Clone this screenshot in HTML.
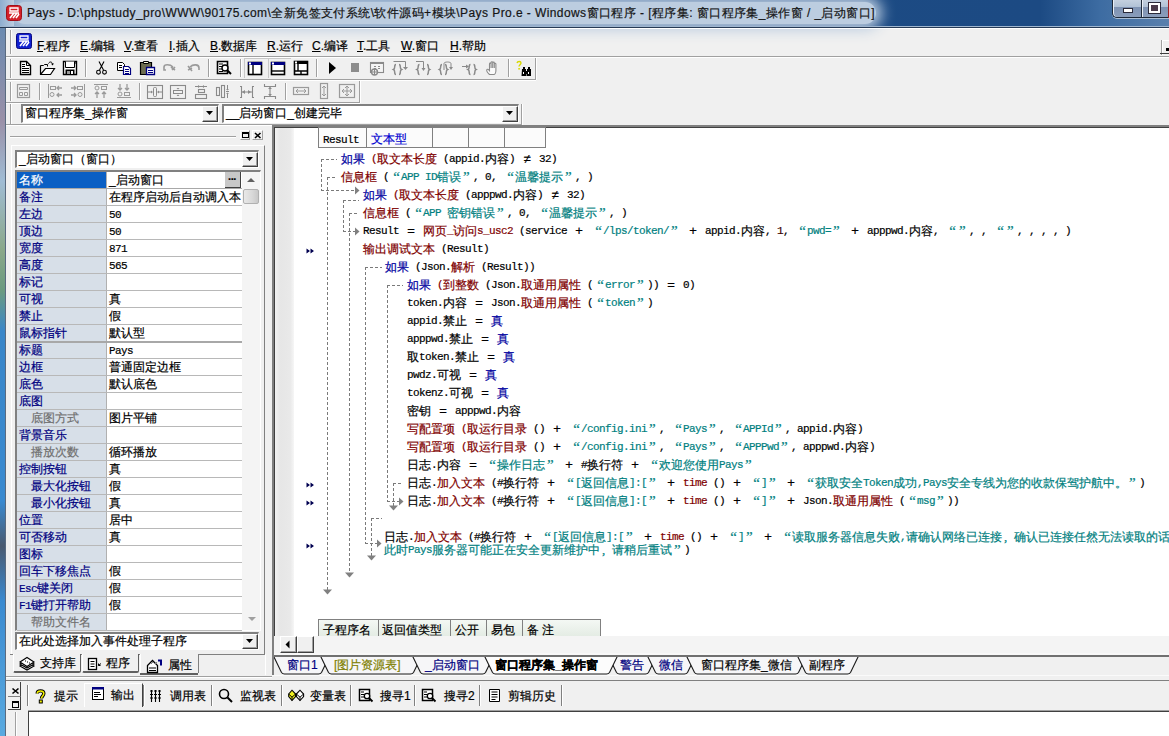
<!DOCTYPE html><html><head><meta charset="utf-8"><style>
*{margin:0;padding:0;box-sizing:border-box}
html,body{width:1169px;height:736px;overflow:hidden;background:#f0f0f0;font-family:"Liberation Sans",sans-serif;font-size:12px;color:#000;position:relative}
.t{position:absolute;white-space:pre;line-height:14px;-webkit-text-stroke:0.2px}
svg{position:absolute;overflow:visible}
.c{position:absolute;white-space:pre;line-height:14px;font-size:12px;-webkit-text-stroke:0.2px}
</style></head><body><div style="position:absolute;left:0;top:0;width:1169px;height:27px;background:linear-gradient(90deg,#7b9dc2 0px,#6a90bb 20px,#2c5b92 420px,#1c4b84 720px,#1c4a83 1040px,#3d6ca2 1100px,#5a80ad 1169px)"></div>
<div style="position:absolute;left:14px;top:2px;width:862px;height:22px;background:#bccde0;border-radius:11px;box-shadow:0 0 14px 6px #bccde0"></div>
<div style="position:absolute;left:0;top:0;width:14px;height:26px;background:linear-gradient(90deg,#8eadcf,#bccde0)"></div>
<div style="position:absolute;left:0px;top:26px;width:1169px;height:1px;background:#9fb6cf"></div>
<div style="position:absolute;left:0px;top:27px;width:1169px;height:1px;background:#263a55"></div>
<div style="position:absolute;left:6px;top:28px;width:1163px;height:1px;background:#ffffff"></div>
<svg style="left:6px;top:5px" width="16" height="16" viewBox="0 0 16 16"><rect x="0.5" y="0.5" width="15" height="15" rx="3" fill="#d4202a" stroke="#a01018"/><path d="M4 3h8v3H4z" fill="none" stroke="#fff" stroke-width="1.3"/><path d="M3 8h10M4 13l4-5M7 13l4-5M10 13l3-4" stroke="#fff" stroke-width="1.6"/></svg>
<div class="t" style="left:27px;top:6px;color:#151515;letter-spacing:0.42px">Pays - D:\phpstudy_pro\WWW\90175.com\全新免签支付系统\软件源码+模块\Pays Pro.e - Windows窗口程序 - [程序集: 窗口程序集_操作窗 / _启动窗口]</div>
<div style="position:absolute;left:1112px;top:-3px;width:31px;height:21px;border:1px solid #1e2a3a;border-right:none;border-radius:0 0 0 5px;background:linear-gradient(#c9d4e2 0,#b2c2d6 45%,#7f93b3 50%,#8a9dbb 100%);box-shadow:inset 1px 0 #e8eef6, 0 1px #a9bdd4"></div>
<div style="position:absolute;left:1141px;top:-3px;width:28px;height:21px;border:1px solid #1e2a3a;border-right:none;background:linear-gradient(#c9d4e2 0,#b2c2d6 45%,#7f93b3 50%,#8a9dbb 100%);box-shadow:inset 1px 0 #e8eef6, 0 1px #a9bdd4"></div>
<div style="position:absolute;left:1123px;top:8px;width:10px;height:5px;background:#fff;border:1px solid #2a2a3a"></div>
<div style="position:absolute;left:1149px;top:3px;width:11px;height:10px;border:2px solid #fff;background:#4a3a4a;outline:1px solid #2a2a3a"></div>
<div style="position:absolute;left:1168px;top:0px;width:1px;height:18px;background:#a02020"></div>
<div style="position:absolute;left:0;top:28px;width:5px;height:708px;background:linear-gradient(#6a8ab0 0px,#9a90a8 93px,#a0bcd4 153px,#8aa888 223px,#6a9a80 263px,#3a86c8 303px,#3a8ad0 473px,#4a5a70 518px,#3a8ad0 573px,#5aaae0 708px)"></div>
<div style="position:absolute;left:5px;top:28px;width:1px;height:708px;background:#5a6b80"></div>
<div style="position:absolute;left:6px;top:56px;width:1163px;height:1px;background:#a0a0a0"></div>
<div style="position:absolute;left:6px;top:57px;width:1163px;height:1px;background:#ffffff"></div>
<div style="position:absolute;left:10px;top:30px;width:1px;height:24px;background:#a0a0a0"></div>
<div style="position:absolute;left:11px;top:30px;width:1px;height:24px;background:#ffffff"></div>
<svg style="left:16px;top:33px" width="16" height="16" viewBox="0 0 16 16"><rect x="0.5" y="0.5" width="15" height="15" rx="2" fill="#1020d0" stroke="#0a0a80"/><path d="M4 3h8v3H4z" fill="none" stroke="#fff" stroke-width="1.3"/><path d="M3 8h10M4 13l4-5M7 13l4-5M10 13l3-4" stroke="#fff" stroke-width="1.6"/></svg>
<div class="t" style="left:37px;top:39px;"><u>F</u>.程序</div>
<div class="t" style="left:80px;top:39px;"><u>E</u>.编辑</div>
<div class="t" style="left:124px;top:39px;"><u>V</u>.查看</div>
<div class="t" style="left:169px;top:39px;"><u>I</u>.插入</div>
<div class="t" style="left:210px;top:39px;"><u>B</u>.数据库</div>
<div class="t" style="left:267px;top:39px;"><u>R</u>.运行</div>
<div class="t" style="left:312px;top:39px;"><u>C</u>.编译</div>
<div class="t" style="left:357px;top:39px;"><u>T</u>.工具</div>
<div class="t" style="left:401px;top:39px;"><u>W</u>.窗口</div>
<div class="t" style="left:450px;top:39px;"><u>H</u>.帮助</div>
<div style="position:absolute;left:1162px;top:40px;width:8px;height:15px;border-left:1px solid #fff;border-top:1px solid #fff;box-shadow:-1px 0 #a0a0a0"></div>
<div style="position:absolute;left:1166px;top:48px;width:3px;height:3px;background:#000"></div>
<div style="position:absolute;left:1160px;top:53px;width:9px;height:1px;background:#404040"></div>
<div style="position:absolute;left:6px;top:79px;width:530px;height:1px;background:#a0a0a0"></div>
<div style="position:absolute;left:6px;top:80px;width:530px;height:1px;background:#ffffff"></div>
<div style="position:absolute;left:535px;top:58px;width:1px;height:22px;background:#a0a0a0"></div>
<div style="position:absolute;left:536px;top:58px;width:1px;height:22px;background:#ffffff"></div>
<div style="position:absolute;left:10px;top:59px;width:1px;height:19px;background:#a0a0a0"></div>
<div style="position:absolute;left:11px;top:59px;width:1px;height:19px;background:#ffffff"></div>
<div style="position:absolute;left:6px;top:102px;width:354px;height:1px;background:#a0a0a0"></div>
<div style="position:absolute;left:6px;top:103px;width:354px;height:1px;background:#ffffff"></div>
<div style="position:absolute;left:359px;top:81px;width:1px;height:22px;background:#a0a0a0"></div>
<div style="position:absolute;left:360px;top:81px;width:1px;height:22px;background:#ffffff"></div>
<div style="position:absolute;left:10px;top:82px;width:1px;height:19px;background:#a0a0a0"></div>
<div style="position:absolute;left:11px;top:82px;width:1px;height:19px;background:#ffffff"></div>
<div style="position:absolute;left:6px;top:124px;width:516px;height:1px;background:#a0a0a0"></div>
<div style="position:absolute;left:6px;top:125px;width:516px;height:1px;background:#ffffff"></div>
<div style="position:absolute;left:521px;top:104px;width:1px;height:21px;background:#a0a0a0"></div>
<div style="position:absolute;left:522px;top:104px;width:1px;height:21px;background:#ffffff"></div>
<div style="position:absolute;left:10px;top:104px;width:1px;height:20px;background:#a0a0a0"></div>
<div style="position:absolute;left:11px;top:104px;width:1px;height:20px;background:#ffffff"></div>
<svg style="left:19px;top:61px" width="14" height="14" viewBox="0 0 14 14"><path d="M1.5 0.5h6l4 4v9h-10z" fill="#fff" stroke="#000" stroke-width="1.4"/><path d="M7.5 0.5v4h4" fill="none" stroke="#000"/><path d="M3 3.5h3M3 5.5h3M3 7.5h7M3 9.5h7M3 11.5h7" stroke="#000" stroke-width="1"/></svg>
<svg style="left:40px;top:61px" width="15" height="14" viewBox="0 0 15 14"><path d="M0.5 4.5h3l1-1h3v2" fill="none" stroke="#000"/><path d="M0.5 4.5v9h10l4-6h-9l-5 6" fill="#fff" stroke="#000" stroke-width="1.2"/><path d="M8.5 2.5c1-2 3-2 4 0" fill="none" stroke="#000"/><path d="M11 2.5h3l-1.5 2z" fill="#000"/></svg>
<svg style="left:63px;top:61px" width="14" height="14" viewBox="0 0 14 14"><path d="M0.5 0.5h13v13h-13z" fill="#fff" stroke="#000" stroke-width="1.4"/><path d="M2.5 0.5v6h9v-6" fill="#fff" stroke="#000"/><path d="M2.5 8.5h9v5h-9z" fill="#000"/><rect x="4" y="10" width="3" height="3" fill="#999"/><rect x="8" y="10" width="2" height="3" fill="#fff"/><rect x="12" y="1.5" width="1" height="1" fill="#000"/></svg>
<div style="position:absolute;left:85px;top:59px;width:1px;height:18px;background:#a0a0a0"></div>
<div style="position:absolute;left:86px;top:59px;width:1px;height:18px;background:#ffffff"></div>
<svg style="left:96px;top:61px" width="11" height="14" viewBox="0 0 11 14"><path d="M3 0.5l4.5 8.5M8 0.5l-4.5 8.5" stroke="#000" stroke-width="1.1" fill="none"/><circle cx="2.5" cy="11.2" r="1.9" fill="none" stroke="#000" stroke-width="1.1"/><circle cx="8.5" cy="11.2" r="1.9" fill="none" stroke="#000" stroke-width="1.1"/></svg>
<svg style="left:117px;top:62px" width="15" height="14" viewBox="0 0 15 14"><path d="M0.5 0.5h5l2 2v6h-7z" fill="#fff" stroke="#000"/><path d="M2 3.5h3M2 5.5h3" stroke="#000"/><path d="M6.5 4.5h5l2 2v6h-7z" fill="#fff" stroke="#000080" stroke-width="1.2"/><path d="M8 7.5h4M8 9.5h4M8 11.5h4" stroke="#000080"/></svg>
<svg style="left:140px;top:61px" width="15" height="14" viewBox="0 0 15 14"><path d="M0.5 1.5h11v12h-11z" fill="#6e6e50" stroke="#000" stroke-width="1.2"/><path d="M3.5 0.5h5v2h-5z" fill="#ffffe0" stroke="#000"/><path d="M6.5 6.5h8v7h-8z" fill="#fff" stroke="#000080" stroke-width="1.3"/><path d="M8 9.5h5M8 11.5h5" stroke="#000080"/></svg>
<svg style="left:162px;top:60px" width="16" height="16" viewBox="0 0 16 16"><path d="M2 7c0-3 6-3 9 0" fill="none" stroke="#9a9a9a" stroke-width="1.6"/><path d="M2 7v3h2" fill="none" stroke="#9a9a9a" stroke-width="1.6"/><path d="M9 7l4 3M13 7l-3 3" stroke="#9a9a9a" stroke-width="1.6"/></svg>
<svg style="left:185px;top:60px" width="16" height="16" viewBox="0 0 16 16"><path d="M5 7c3-3 9-3 9 1v2" fill="none" stroke="#9a9a9a" stroke-width="1.6"/><path d="M3 6l4 5M3 10l4-2" stroke="#9a9a9a" stroke-width="1.6"/></svg>
<div style="position:absolute;left:208px;top:59px;width:1px;height:18px;background:#a0a0a0"></div>
<div style="position:absolute;left:209px;top:59px;width:1px;height:18px;background:#ffffff"></div>
<svg style="left:216px;top:60px" width="16" height="16" viewBox="0 0 16 16"><path d="M1.5 1.5h10v12h-10z" fill="#fff" stroke="#000" stroke-width="1.6"/><path d="M3 4h4M3 6.5h3M3 9h3M3 11.5h4" stroke="#000"/><circle cx="9" cy="8" r="3" fill="#fff" stroke="#000" stroke-width="1.4"/><path d="M11 10l4 4" stroke="#000" stroke-width="2"/></svg>
<div style="position:absolute;left:240px;top:59px;width:1px;height:18px;background:#a0a0a0"></div>
<div style="position:absolute;left:241px;top:59px;width:1px;height:18px;background:#ffffff"></div>
<div style="position:absolute;left:244px;top:58px;width:24px;height:20px;border-left:1px solid #c8c8c8;border-top:1px solid #c8c8c8"></div>
<div style="position:absolute;left:268px;top:58px;width:23px;height:20px;border-left:1px solid #c8c8c8;border-top:1px solid #c8c8c8"></div>
<svg style="left:247px;top:60px" width="16" height="16" viewBox="0 0 16 16"><rect x="1.5" y="2.5" width="13" height="12" fill="#fff" stroke="#000" stroke-width="1.6"/><rect x="1" y="2" width="14" height="3" fill="#000080"/><rect x="2" y="2.5" width="2" height="2" fill="#fff"/><path d="M6 5v9" stroke="#000" stroke-width="1.4"/></svg>
<svg style="left:270px;top:60px" width="16" height="16" viewBox="0 0 16 16"><rect x="1.5" y="2.5" width="13" height="12" fill="#fff" stroke="#000" stroke-width="1.6"/><rect x="1" y="2" width="14" height="3" fill="#000080"/><rect x="2" y="2.5" width="2" height="2" fill="#fff"/><path d="M1 11h14" stroke="#000" stroke-width="1.4"/></svg>
<svg style="left:293px;top:60px" width="16" height="16" viewBox="0 0 16 16"><rect x="1.5" y="1.5" width="13" height="13" fill="#fff" stroke="#000" stroke-width="1.6"/><rect x="1" y="1" width="14" height="3" fill="#000"/><rect x="2" y="1.5" width="2" height="2" fill="#fff"/><path d="M5 4v7M1 11h14M8 11v4" stroke="#000" stroke-width="1.4"/></svg>
<div style="position:absolute;left:316px;top:59px;width:1px;height:18px;background:#a0a0a0"></div>
<div style="position:absolute;left:317px;top:59px;width:1px;height:18px;background:#ffffff"></div>
<svg style="left:324px;top:60px" width="16" height="16" viewBox="0 0 16 16"><path d="M5 2l7 6-7 6z" fill="#000"/></svg>
<svg style="left:347px;top:60px" width="16" height="16" viewBox="0 0 16 16"><rect x="4" y="3" width="8" height="9" fill="#8c8c8c"/></svg>
<svg style="left:370px;top:61px" width="15" height="15" viewBox="0 0 15 15"><rect x="0.5" y="1.5" width="13" height="10" fill="#f4f4f4" stroke="#8a8a8a" stroke-width="1.1"/><rect x="0" y="1" width="14" height="2" fill="#8a8a8a"/><path d="M4 5.5h2M8 5.5h2M4 7.5h2M8 7.5h2" stroke="#8a8a8a"/><circle cx="4.5" cy="11" r="3" fill="#f0f0f0" stroke="#8a8a8a" stroke-width="1.4"/><path d="M4.5 8v6M1.5 11h6" stroke="#8a8a8a"/></svg>
<svg style="left:393px;top:61px" width="16" height="15" viewBox="0 0 16 15"><path d="M3.0 3.5c-1.3 0-1.3 .8-1.3 2.3s0 2.2-1.2 2.7c1.2 .5 1.2 1.2 1.2 2.7s0 2.3 1.3 2.3" fill="none" stroke="#8a8a8a" stroke-width="1.5"/><path d="M6 3.5c1.3 0 1.3 .8 1.3 2.3s0 2.2 1.2 2.7c-1.2 .5-1.2 1.2-1.2 2.7s0 2.3-1.3 2.3" fill="none" stroke="#8a8a8a" stroke-width="1.5"/><path d="M0.5 0.5h12v6" fill="none" stroke="#8a8a8a"/><path d="M10 6h5l-2.5 3z" fill="#8a8a8a"/></svg>
<svg style="left:416px;top:61px" width="16" height="15" viewBox="0 0 16 15"><path d="M3.5 3.5c-1.3 0-1.3 .8-1.3 2.3s0 2.2-1.2 2.7c1.2 .5 1.2 1.2 1.2 2.7s0 2.3 1.3 2.3" fill="none" stroke="#8a8a8a" stroke-width="1.5"/><path d="M11 3.5c1.3 0 1.3 .8 1.3 2.3s0 2.2 1.2 2.7c-1.2 .5-1.2 1.2-1.2 2.7s0 2.3-1.3 2.3" fill="none" stroke="#8a8a8a" stroke-width="1.5"/><path d="M0 0.5h7.5v7" fill="none" stroke="#8a8a8a"/><path d="M5.5 7h4l-2 3z" fill="#8a8a8a"/></svg>
<svg style="left:439px;top:61px" width="16" height="15" viewBox="0 0 16 15"><path d="M3.0 3.5c-1.3 0-1.3 .8-1.3 2.3s0 2.2-1.2 2.7c1.2 .5 1.2 1.2 1.2 2.7s0 2.3 1.3 2.3" fill="none" stroke="#8a8a8a" stroke-width="1.5"/><path d="M6 3.5c1.3 0 1.3 .8 1.3 2.3s0 2.2 1.2 2.7c-1.2 .5-1.2 1.2-1.2 2.7s0 2.3-1.3 2.3" fill="none" stroke="#8a8a8a" stroke-width="1.5"/><path d="M5 9V2.5c0-2 7-2 7 0v4" fill="none" stroke="#8a8a8a"/><path d="M10 6h4l-2 3z" fill="#8a8a8a"/></svg>
<svg style="left:462px;top:61px" width="16" height="15" viewBox="0 0 16 15"><path d="M8.5 3.5c-1.3 0-1.3 .8-1.3 2.3s0 2.2-1.2 2.7c1.2 .5 1.2 1.2 1.2 2.7s0 2.3 1.3 2.3" fill="none" stroke="#8a8a8a" stroke-width="1.5"/><path d="M11.5 3.5c1.3 0 1.3 .8 1.3 2.3s0 2.2 1.2 2.7c-1.2 .5-1.2 1.2-1.2 2.7s0 2.3-1.3 2.3" fill="none" stroke="#8a8a8a" stroke-width="1.5"/><path d="M0 5.5h6" stroke="#8a8a8a"/><path d="M4 3.5l3 2-3 2z" fill="#8a8a8a"/></svg>
<svg style="left:486px;top:61px" width="14" height="15" viewBox="0 0 14 15"><path d="M3.5 13.5c-2-2-3.5-4-2.5-5 .7-.7 1.5 0 2.5 1.2V3c0-1.2 1.6-1.2 1.6 0v4V1.6c0-1.2 1.6-1.2 1.6 0V7V2c0-1.2 1.6-1.2 1.6 0v5V3.2c0-1.2 1.6-1.2 1.6 0v6.3c0 2-1 4-2 4z" fill="#fafafa" stroke="#8a8a8a" stroke-width="1.1"/></svg>
<div style="position:absolute;left:508px;top:59px;width:1px;height:18px;background:#a0a0a0"></div>
<div style="position:absolute;left:509px;top:59px;width:1px;height:18px;background:#ffffff"></div>
<svg style="left:516px;top:61px" width="16" height="16" viewBox="0 0 16 16"><path d="M1 2c.5-2 4-2 4 0 0 1.5-2 2-2 3.5" fill="none" stroke="#d8d800" stroke-width="1.4"/><rect x="2.3" y="7" width="1.6" height="1.6" fill="#d8d800"/><path d="M6 8h4v2h1V8h4v7h-4.5v-2h-.5v2H5.5z" fill="#000"/><path d="M7 6h2v2H7zM12 6h2v2h-2z" fill="#000"/><rect x="7" y="11" width="1" height="2" fill="#fff"/><rect x="12" y="11" width="1" height="2" fill="#fff"/></svg>
<svg style="left:16px;top:83px" width="16" height="16" viewBox="0 0 16 16"><rect x="1.5" y="1.5" width="12" height="13" fill="none" stroke="#9a9a9a" stroke-width="1.2"/><path d="M3.5 4.5h8v2h-8zM3.5 9.5h3v3h-3zM8.5 9.5h3v3h-3z" fill="none" stroke="#9a9a9a"/></svg>
<div style="position:absolute;left:39px;top:83px;width:1px;height:17px;background:#a0a0a0"></div>
<div style="position:absolute;left:40px;top:83px;width:1px;height:17px;background:#ffffff"></div>
<svg style="left:47px;top:83px" width="16" height="16" viewBox="0 0 16 16"><path d="M1.5 1v14" stroke="#9a9a9a"/><rect x="3.5" y="3.5" width="5" height="3" fill="none" stroke="#9a9a9a"/><circle cx="5" cy="11.5" r="2" fill="none" stroke="#9a9a9a"/><path d="M10 5h5M12 3l-2 2 2 2M10 12h5M12 10l-2 2 2 2" fill="none" stroke="#9a9a9a" stroke-width="1.3"/></svg>
<svg style="left:70px;top:83px" width="16" height="16" viewBox="0 0 16 16"><path d="M14.5 1v14" stroke="#9a9a9a"/><rect x="7.5" y="3.5" width="5" height="3" fill="none" stroke="#9a9a9a"/><circle cx="10" cy="11.5" r="2" fill="none" stroke="#9a9a9a"/><path d="M1 5h5M4 3l2 2-2 2M1 12h5M4 10l2 2-2 2" fill="none" stroke="#9a9a9a" stroke-width="1.3"/></svg>
<svg style="left:93px;top:83px" width="16" height="16" viewBox="0 0 16 16"><path d="M1 1.5h14" stroke="#9a9a9a"/><circle cx="4" cy="5" r="2" fill="none" stroke="#9a9a9a"/><rect x="8.5" y="3.5" width="5" height="3" fill="none" stroke="#9a9a9a"/><path d="M4 9v6M2 11l2-2 2 2M11 9v6M9 11l2-2 2 2" fill="none" stroke="#9a9a9a" stroke-width="1.3"/></svg>
<svg style="left:116px;top:83px" width="16" height="16" viewBox="0 0 16 16"><path d="M1 14.5h14" stroke="#9a9a9a"/><circle cx="4" cy="11" r="2" fill="none" stroke="#9a9a9a"/><rect x="8.5" y="9.5" width="5" height="3" fill="none" stroke="#9a9a9a"/><path d="M4 1v6M2 5l2 2 2-2M11 1v6M9 5l2 2 2-2" fill="none" stroke="#9a9a9a" stroke-width="1.3"/></svg>
<div style="position:absolute;left:139px;top:83px;width:1px;height:17px;background:#a0a0a0"></div>
<div style="position:absolute;left:140px;top:83px;width:1px;height:17px;background:#ffffff"></div>
<svg style="left:147px;top:83px" width="16" height="16" viewBox="0 0 16 16"><rect x="0.5" y="2.5" width="15" height="13" fill="none" stroke="#8a8a8a" stroke-width="1.1"/><rect x="6.5" y="4.5" width="3" height="9" rx="1" fill="none" stroke="#8a8a8a"/><path d="M1 9h4M12 9h3" stroke="#8a8a8a"/><path d="M4 7.5l2 1.5-2 1.5zM12 7.5l-2 1.5 2 1.5z" fill="#8a8a8a"/></svg>
<svg style="left:170px;top:83px" width="16" height="16" viewBox="0 0 16 16"><rect x="0.5" y="2.5" width="15" height="13" fill="none" stroke="#8a8a8a" stroke-width="1.1"/><rect x="3.5" y="7.5" width="9" height="3" fill="none" stroke="#8a8a8a"/><path d="M6.5 5h3l-1.5 1.5zM6.5 13h3l-1.5-1.5z" fill="#8a8a8a"/></svg>
<svg style="left:193px;top:83px" width="16" height="16" viewBox="0 0 16 16"><path d="M2 3.5h12" stroke="#8a8a8a"/><path d="M5 2l2 1.5-2 1.5zM11 2l-2 1.5 2 1.5z" fill="#8a8a8a"/><rect x="5.5" y="6.5" width="6" height="3" fill="none" stroke="#8a8a8a" stroke-width="1.1"/><rect x="2.5" y="11.5" width="11" height="4" fill="none" stroke="#8a8a8a" stroke-width="1.1"/></svg>
<svg style="left:216px;top:83px" width="16" height="16" viewBox="0 0 16 16"><rect x="0.5" y="4.5" width="3" height="8" fill="none" stroke="#8a8a8a" stroke-width="1.1"/><rect x="5.5" y="2.5" width="3" height="12" fill="none" stroke="#8a8a8a" stroke-width="1.1"/><path d="M11.5 2v5M11.5 10v5M10 8.5h3" stroke="#8a8a8a"/><path d="M10 6h3l-1.5 1.5zM10 11h3l-1.5-1.5z" fill="#8a8a8a"/></svg>
<svg style="left:239px;top:83px" width="16" height="16" viewBox="0 0 16 16"><path d="M1 3.5h1.5v11H1M15 3.5h-1.5v11H15M3 9h10" fill="none" stroke="#8a8a8a" stroke-width="1.1"/><path d="M3 9l3-2v4zM12 9l-3-2v4z" fill="#8a8a8a"/></svg>
<svg style="left:262px;top:83px" width="16" height="16" viewBox="0 0 16 16"><path d="M2 3.5h12M2 13.5h12M2.5 1v3M13.5 1v3M2.5 13v3M13.5 13v3M8 4v9" fill="none" stroke="#8a8a8a" stroke-width="1.1"/><path d="M6 6l2-2 2 2zM6 11l2 2 2-2z" fill="#8a8a8a"/></svg>
<div style="position:absolute;left:285px;top:83px;width:1px;height:17px;background:#a0a0a0"></div>
<div style="position:absolute;left:286px;top:83px;width:1px;height:17px;background:#ffffff"></div>
<svg style="left:293px;top:83px" width="16" height="16" viewBox="0 0 16 16"><rect x="0.5" y="4.5" width="15" height="7" fill="none" stroke="#9a9a9a" stroke-width="1.2"/><path d="M3 8h10M5 6l-2 2 2 2M11 6l2 2-2 2" fill="none" stroke="#9a9a9a"/></svg>
<svg style="left:316px;top:83px" width="16" height="16" viewBox="0 0 16 16"><rect x="4.5" y="0.5" width="7" height="15" fill="none" stroke="#9a9a9a" stroke-width="1.2"/><path d="M8 3v10M6 5l2-2 2 2M6 11l2 2 2-2" fill="none" stroke="#9a9a9a"/></svg>
<svg style="left:339px;top:83px" width="16" height="16" viewBox="0 0 16 16"><rect x="0.5" y="1.5" width="15" height="13" fill="none" stroke="#9a9a9a" stroke-width="1.2"/><path d="M3 8h10M8 3v10M5 6l-2 2 2 2M11 6l2 2-2 2M6 5l2-2 2 2M6 11l2 2 2-2" fill="none" stroke="#9a9a9a"/></svg>
<div style="position:absolute;left:21px;top:104px;width:198px;height:19px;background:#fff;border-top:2px solid #808080;border-left:2px solid #808080;border-right:1px solid #fff;border-bottom:1px solid #fff"></div>
<div class="t" style="left:25px;top:106px;">窗口程序集_操作窗</div>
<div style="position:absolute;left:202px;top:106px;width:16px;height:16px;background:#f0f0f0;border-top:1px solid #fff;border-left:1px solid #fff;border-right:1px solid #404040;border-bottom:1px solid #404040;box-shadow:inset -1px -1px #a0a0a0"></div>
<svg style="left:206px;top:111px" width="8" height="5"><path d="M0 0h7l-3.5 4z" fill="#000"/></svg>
<div style="position:absolute;left:222px;top:104px;width:297px;height:19px;background:#fff;border-top:2px solid #808080;border-left:2px solid #808080;border-right:1px solid #fff;border-bottom:1px solid #fff"></div>
<div class="t" style="left:226px;top:106px;">__启动窗口_创建完毕</div>
<div style="position:absolute;left:502px;top:106px;width:16px;height:16px;background:#f0f0f0;border-top:1px solid #fff;border-left:1px solid #fff;border-right:1px solid #404040;border-bottom:1px solid #404040;box-shadow:inset -1px -1px #a0a0a0"></div>
<svg style="left:506px;top:111px" width="8" height="5"><path d="M0 0h7l-3.5 4z" fill="#000"/></svg>
<div style="position:absolute;left:10px;top:136px;width:226px;height:1px;background:#a0a0a0"></div>
<div style="position:absolute;left:10px;top:137px;width:226px;height:1px;background:#ffffff"></div>
<div style="position:absolute;left:240px;top:130px;width:10px;height:10px;border:1px solid #fff;border-right-color:#a0a0a0;border-bottom-color:#a0a0a0"></div>
<div style="position:absolute;left:242px;top:132px;width:7px;height:6px;border:1px solid #000;border-top-width:2px"></div>
<div style="position:absolute;left:252px;top:130px;width:11px;height:10px;border:1px solid #fff;border-right-color:#a0a0a0;border-bottom-color:#a0a0a0"></div>
<svg style="left:254px;top:132px" width="8" height="7"><path d="M1 1l5.5 5M6.5 1l-5.5 5" stroke="#000" stroke-width="1.6"/></svg>
<div style="position:absolute;left:11px;top:145px;width:254px;height:510px;border-left:1px solid #fff;border-top:1px solid #fff;border-right:1px solid #808080;border-bottom:1px solid #808080"></div>
<div style="position:absolute;left:15px;top:150px;width:244px;height:18px;background:#fff;border-top:2px solid #808080;border-left:2px solid #808080;border-right:1px solid #fff;border-bottom:1px solid #fff"></div>
<div class="t" style="left:19px;top:152px;">_启动窗口（窗口）</div>
<div style="position:absolute;left:242px;top:152px;width:16px;height:15px;background:#f0f0f0;border-top:1px solid #fff;border-left:1px solid #fff;border-right:1px solid #404040;border-bottom:1px solid #404040;box-shadow:inset -1px -1px #a0a0a0"></div>
<svg style="left:246px;top:157px" width="8" height="5"><path d="M0 0h7l-3.5 4z" fill="#000"/></svg>
<div style="position:absolute;left:15px;top:170px;width:246px;height:461px;border-top:2px solid #808080;border-left:2px solid #808080;border-right:1px solid #fff;border-bottom:1px solid #fff;background:#fff"></div>
<div style="position:absolute;left:17px;top:172px;width:89px;height:16px;background:#0a5fc4"></div>
<div class="t" style="left:19px;top:173px;color:#fff">名称</div>
<div style="position:absolute;left:17px;top:188px;width:225px;height:1px;background:#b8b8b8"></div>
<div style="position:absolute;left:106px;top:172px;width:1px;height:16px;background:#b0b0b0"></div>
<div class="t" style="left:109px;top:173px;">_启动窗口</div>
<div style="position:absolute;left:17px;top:189px;width:89px;height:16px;background:#d7dfe8"></div>
<div class="t" style="left:19px;top:190px;color:#000080">备注</div>
<div style="position:absolute;left:17px;top:205px;width:225px;height:1px;background:#b8b8b8"></div>
<div style="position:absolute;left:106px;top:189px;width:1px;height:16px;background:#b0b0b0"></div>
<div class="t" style="left:109px;top:190px;">在程序启动后自动调入本</div>
<div style="position:absolute;left:17px;top:206px;width:89px;height:16px;background:#d7dfe8"></div>
<div class="t" style="left:19px;top:207px;color:#000080">左边</div>
<div style="position:absolute;left:17px;top:222px;width:225px;height:1px;background:#b8b8b8"></div>
<div style="position:absolute;left:106px;top:206px;width:1px;height:16px;background:#b0b0b0"></div>
<div class="t" style="left:109px;top:207px;"><span style="font-family:'Liberation Mono',monospace;font-size:11px;letter-spacing:-0.6px">50</span></div>
<div style="position:absolute;left:17px;top:223px;width:89px;height:16px;background:#d7dfe8"></div>
<div class="t" style="left:19px;top:224px;color:#000080">顶边</div>
<div style="position:absolute;left:17px;top:239px;width:225px;height:1px;background:#b8b8b8"></div>
<div style="position:absolute;left:106px;top:223px;width:1px;height:16px;background:#b0b0b0"></div>
<div class="t" style="left:109px;top:224px;"><span style="font-family:'Liberation Mono',monospace;font-size:11px;letter-spacing:-0.6px">50</span></div>
<div style="position:absolute;left:17px;top:240px;width:89px;height:16px;background:#d7dfe8"></div>
<div class="t" style="left:19px;top:241px;color:#000080">宽度</div>
<div style="position:absolute;left:17px;top:256px;width:225px;height:1px;background:#b8b8b8"></div>
<div style="position:absolute;left:106px;top:240px;width:1px;height:16px;background:#b0b0b0"></div>
<div class="t" style="left:109px;top:241px;"><span style="font-family:'Liberation Mono',monospace;font-size:11px;letter-spacing:-0.6px">871</span></div>
<div style="position:absolute;left:17px;top:257px;width:89px;height:16px;background:#d7dfe8"></div>
<div class="t" style="left:19px;top:258px;color:#000080">高度</div>
<div style="position:absolute;left:17px;top:273px;width:225px;height:1px;background:#b8b8b8"></div>
<div style="position:absolute;left:106px;top:257px;width:1px;height:16px;background:#b0b0b0"></div>
<div class="t" style="left:109px;top:258px;"><span style="font-family:'Liberation Mono',monospace;font-size:11px;letter-spacing:-0.6px">565</span></div>
<div style="position:absolute;left:17px;top:274px;width:89px;height:16px;background:#d7dfe8"></div>
<div class="t" style="left:19px;top:275px;color:#000080">标记</div>
<div style="position:absolute;left:17px;top:290px;width:225px;height:1px;background:#b8b8b8"></div>
<div style="position:absolute;left:106px;top:274px;width:1px;height:16px;background:#b0b0b0"></div>
<div style="position:absolute;left:17px;top:291px;width:89px;height:16px;background:#d7dfe8"></div>
<div class="t" style="left:19px;top:292px;color:#000080">可视</div>
<div style="position:absolute;left:17px;top:307px;width:225px;height:1px;background:#b8b8b8"></div>
<div style="position:absolute;left:106px;top:291px;width:1px;height:16px;background:#b0b0b0"></div>
<div class="t" style="left:109px;top:292px;">真</div>
<div style="position:absolute;left:17px;top:308px;width:89px;height:16px;background:#d7dfe8"></div>
<div class="t" style="left:19px;top:309px;color:#000080">禁止</div>
<div style="position:absolute;left:17px;top:324px;width:225px;height:1px;background:#b8b8b8"></div>
<div style="position:absolute;left:106px;top:308px;width:1px;height:16px;background:#b0b0b0"></div>
<div class="t" style="left:109px;top:309px;">假</div>
<div style="position:absolute;left:17px;top:325px;width:89px;height:16px;background:#d7dfe8"></div>
<div class="t" style="left:19px;top:326px;color:#000080">鼠标指针</div>
<div style="position:absolute;left:17px;top:341px;width:225px;height:1px;background:#b8b8b8"></div>
<div style="position:absolute;left:106px;top:325px;width:1px;height:16px;background:#b0b0b0"></div>
<div class="t" style="left:109px;top:326px;">默认型</div>
<div style="position:absolute;left:17px;top:342px;width:89px;height:16px;background:#d7dfe8"></div>
<div class="t" style="left:19px;top:343px;color:#000080">标题</div>
<div style="position:absolute;left:17px;top:358px;width:225px;height:1px;background:#b8b8b8"></div>
<div style="position:absolute;left:106px;top:342px;width:1px;height:16px;background:#b0b0b0"></div>
<div class="t" style="left:109px;top:343px;"><span style="font-family:'Liberation Mono',monospace;font-size:11px;letter-spacing:-0.6px">Pays</span></div>
<div style="position:absolute;left:17px;top:359px;width:89px;height:16px;background:#d7dfe8"></div>
<div class="t" style="left:19px;top:360px;color:#000080">边框</div>
<div style="position:absolute;left:17px;top:375px;width:225px;height:1px;background:#b8b8b8"></div>
<div style="position:absolute;left:106px;top:359px;width:1px;height:16px;background:#b0b0b0"></div>
<div class="t" style="left:109px;top:360px;">普通固定边框</div>
<div style="position:absolute;left:17px;top:376px;width:89px;height:16px;background:#d7dfe8"></div>
<div class="t" style="left:19px;top:377px;color:#000080">底色</div>
<div style="position:absolute;left:17px;top:392px;width:225px;height:1px;background:#b8b8b8"></div>
<div style="position:absolute;left:106px;top:376px;width:1px;height:16px;background:#b0b0b0"></div>
<div class="t" style="left:109px;top:377px;">默认底色</div>
<div style="position:absolute;left:17px;top:393px;width:89px;height:16px;background:#d7dfe8"></div>
<div class="t" style="left:19px;top:394px;color:#000080">底图</div>
<div style="position:absolute;left:17px;top:409px;width:225px;height:1px;background:#b8b8b8"></div>
<div style="position:absolute;left:106px;top:393px;width:1px;height:16px;background:#b0b0b0"></div>
<div style="position:absolute;left:17px;top:410px;width:89px;height:16px;background:#d7dfe8"></div>
<div class="t" style="left:31px;top:411px;color:#707070">底图方式</div>
<div style="position:absolute;left:17px;top:426px;width:225px;height:1px;background:#b8b8b8"></div>
<div style="position:absolute;left:106px;top:410px;width:1px;height:16px;background:#b0b0b0"></div>
<div class="t" style="left:109px;top:411px;">图片平铺</div>
<div style="position:absolute;left:17px;top:427px;width:89px;height:16px;background:#d7dfe8"></div>
<div class="t" style="left:19px;top:428px;color:#000080">背景音乐</div>
<div style="position:absolute;left:17px;top:443px;width:225px;height:1px;background:#b8b8b8"></div>
<div style="position:absolute;left:106px;top:427px;width:1px;height:16px;background:#b0b0b0"></div>
<div style="position:absolute;left:17px;top:444px;width:89px;height:16px;background:#d7dfe8"></div>
<div class="t" style="left:31px;top:445px;color:#707070">播放次数</div>
<div style="position:absolute;left:17px;top:460px;width:225px;height:1px;background:#b8b8b8"></div>
<div style="position:absolute;left:106px;top:444px;width:1px;height:16px;background:#b0b0b0"></div>
<div class="t" style="left:109px;top:445px;">循环播放</div>
<div style="position:absolute;left:17px;top:461px;width:89px;height:16px;background:#d7dfe8"></div>
<div class="t" style="left:19px;top:462px;color:#000080">控制按钮</div>
<div style="position:absolute;left:17px;top:477px;width:225px;height:1px;background:#b8b8b8"></div>
<div style="position:absolute;left:106px;top:461px;width:1px;height:16px;background:#b0b0b0"></div>
<div class="t" style="left:109px;top:462px;">真</div>
<div style="position:absolute;left:17px;top:478px;width:89px;height:16px;background:#d7dfe8"></div>
<div class="t" style="left:31px;top:479px;color:#000080">最大化按钮</div>
<div style="position:absolute;left:17px;top:494px;width:225px;height:1px;background:#b8b8b8"></div>
<div style="position:absolute;left:106px;top:478px;width:1px;height:16px;background:#b0b0b0"></div>
<div class="t" style="left:109px;top:479px;">假</div>
<div style="position:absolute;left:17px;top:495px;width:89px;height:16px;background:#d7dfe8"></div>
<div class="t" style="left:31px;top:496px;color:#000080">最小化按钮</div>
<div style="position:absolute;left:17px;top:511px;width:225px;height:1px;background:#b8b8b8"></div>
<div style="position:absolute;left:106px;top:495px;width:1px;height:16px;background:#b0b0b0"></div>
<div class="t" style="left:109px;top:496px;">真</div>
<div style="position:absolute;left:17px;top:512px;width:89px;height:16px;background:#d7dfe8"></div>
<div class="t" style="left:19px;top:513px;color:#000080">位置</div>
<div style="position:absolute;left:17px;top:528px;width:225px;height:1px;background:#b8b8b8"></div>
<div style="position:absolute;left:106px;top:512px;width:1px;height:16px;background:#b0b0b0"></div>
<div class="t" style="left:109px;top:513px;">居中</div>
<div style="position:absolute;left:17px;top:529px;width:89px;height:16px;background:#d7dfe8"></div>
<div class="t" style="left:19px;top:530px;color:#000080">可否移动</div>
<div style="position:absolute;left:17px;top:545px;width:225px;height:1px;background:#b8b8b8"></div>
<div style="position:absolute;left:106px;top:529px;width:1px;height:16px;background:#b0b0b0"></div>
<div class="t" style="left:109px;top:530px;">真</div>
<div style="position:absolute;left:17px;top:546px;width:89px;height:16px;background:#d7dfe8"></div>
<div class="t" style="left:19px;top:547px;color:#000080">图标</div>
<div style="position:absolute;left:17px;top:562px;width:225px;height:1px;background:#b8b8b8"></div>
<div style="position:absolute;left:106px;top:546px;width:1px;height:16px;background:#b0b0b0"></div>
<div style="position:absolute;left:17px;top:563px;width:89px;height:16px;background:#d7dfe8"></div>
<div class="t" style="left:19px;top:564px;color:#000080">回车下移焦点</div>
<div style="position:absolute;left:17px;top:579px;width:225px;height:1px;background:#b8b8b8"></div>
<div style="position:absolute;left:106px;top:563px;width:1px;height:16px;background:#b0b0b0"></div>
<div class="t" style="left:109px;top:564px;">假</div>
<div style="position:absolute;left:17px;top:580px;width:89px;height:16px;background:#d7dfe8"></div>
<div class="t" style="left:19px;top:581px;color:#000080"><span style="font-family:'Liberation Mono',monospace;font-size:11px;letter-spacing:-0.6px">Esc</span>键关闭</div>
<div style="position:absolute;left:17px;top:596px;width:225px;height:1px;background:#b8b8b8"></div>
<div style="position:absolute;left:106px;top:580px;width:1px;height:16px;background:#b0b0b0"></div>
<div class="t" style="left:109px;top:581px;">假</div>
<div style="position:absolute;left:17px;top:597px;width:89px;height:16px;background:#d7dfe8"></div>
<div class="t" style="left:19px;top:598px;color:#000080"><span style="font-family:'Liberation Mono',monospace;font-size:11px;letter-spacing:-0.6px">F1</span>键打开帮助</div>
<div style="position:absolute;left:17px;top:613px;width:225px;height:1px;background:#b8b8b8"></div>
<div style="position:absolute;left:106px;top:597px;width:1px;height:16px;background:#b0b0b0"></div>
<div class="t" style="left:109px;top:598px;">假</div>
<div style="position:absolute;left:17px;top:614px;width:89px;height:16px;background:#d7dfe8"></div>
<div class="t" style="left:31px;top:615px;color:#707070">帮助文件名</div>
<div style="position:absolute;left:17px;top:630px;width:225px;height:1px;background:#b8b8b8"></div>
<div style="position:absolute;left:106px;top:614px;width:1px;height:16px;background:#b0b0b0"></div>
<div style="position:absolute;left:17px;top:188px;width:225px;height:1px;background:#a8a8a8"></div>
<div style="position:absolute;left:17px;top:341px;width:225px;height:2px;background:#a8a8a8"></div>
<div style="position:absolute;left:225px;top:172px;width:16px;height:16px;background:#c8c8c8;border-right:1px solid #404040;border-bottom:1px solid #404040"></div>
<div class="t" style="left:228px;top:172px;font-weight:bold;font-size:11px;letter-spacing:-1px">···</div>
<div style="position:absolute;left:242px;top:172px;width:18px;height:458px;background:#f4f4f4"></div>
<svg style="left:246px;top:177px" width="10" height="6"><path d="M1 5l4-4 4 4z" fill="#606060"/></svg>
<div style="position:absolute;left:243px;top:189px;width:16px;height:15px;background:linear-gradient(90deg,#e8e8e8,#d8d8d8 60%,#c8c8c8);border:1px solid #b0b0b0;border-radius:2px"></div>
<svg style="left:247px;top:616px" width="10" height="6"><path d="M1 1l4 4 4-4z" fill="#a0a0a0"/></svg>
<div style="position:absolute;left:15px;top:632px;width:244px;height:18px;background:#fff;border-top:2px solid #808080;border-left:2px solid #808080;border-right:1px solid #fff;border-bottom:1px solid #fff"></div>
<div class="t" style="left:19px;top:634px;">在此处选择加入事件处理子程序</div>
<div style="position:absolute;left:242px;top:634px;width:16px;height:15px;background:#f0f0f0;border-top:1px solid #fff;border-left:1px solid #fff;border-right:1px solid #404040;border-bottom:1px solid #404040;box-shadow:inset -1px -1px #a0a0a0"></div>
<svg style="left:246px;top:639px" width="8" height="5"><path d="M0 0h7l-3.5 4z" fill="#000"/></svg>
<div style="position:absolute;left:10px;top:654px;width:255px;height:1px;background:#808080"></div>
<div style="position:absolute;left:13px;top:654px;width:68px;height:19px;background:#f0f0f0;border-left:1px solid #fff;border-right:1px solid #606060;border-bottom:2px solid #606060;border-radius:0 0 2px 2px"></div>
<div style="position:absolute;left:82px;top:654px;width:57px;height:19px;background:#f0f0f0;border-left:1px solid #fff;border-right:1px solid #606060;border-bottom:2px solid #606060;border-radius:0 0 2px 2px"></div>
<div style="position:absolute;left:140px;top:654px;width:58px;height:19px;background:#f0f0f0"></div>
<div style="position:absolute;left:140px;top:654px;width:1px;height:19px;background:#ffffff"></div>
<div style="position:absolute;left:140px;top:673px;width:58px;height:2px;background:#606060"></div>
<div style="position:absolute;left:198px;top:654px;width:67px;height:1px;background:#808080"></div>
<div style="position:absolute;left:198px;top:654px;width:1px;height:19px;background:#808080"></div>
<div class="t" style="left:40px;top:656px;">支持库</div>
<div class="t" style="left:106px;top:656px;">程序</div>
<div class="t" style="left:168px;top:658px;">属性</div>
<svg style="left:19px;top:656px" width="16" height="15"><path d="M1 10l7-4 7 4-7 4z" fill="#fff" stroke="#000" stroke-width="1.1"/><path d="M1 8l7-4 7 4-7 4z" fill="#fff" stroke="#000" stroke-width="1.1"/><path d="M1 6l7-4.5 7 4.5-7 4.5z" fill="#fff" stroke="#000" stroke-width="1.1"/><path d="M6 5h1M8 6h1M10 7h1" stroke="#000"/></svg>
<svg style="left:87px;top:657px" width="16" height="14"><rect x="1.5" y="1.5" width="8" height="11" fill="#fff" stroke="#000" stroke-width="1.3"/><path d="M3.5 4.5h4M3.5 7h4M3.5 9.5h4" stroke="#000"/><path d="M11.5 8.5l2.5-2M11.5 8.5h2M11.5 8.5v-2" stroke="#000"/></svg>
<svg style="left:146px;top:659px" width="18" height="15"><path d="M1.5 13.5v-7l5-5 5 5v7z" fill="#fff" stroke="#000" stroke-width="1.3"/><path d="M3 9h7M3 11.5h7" stroke="#000" stroke-width="1.2"/><path d="M5 5l2-2 2 2 2-2" stroke="#808080" fill="none"/><path d="M12 1.5l3 0v5" stroke="#000080" stroke-width="2" fill="none"/></svg>
<div style="position:absolute;left:6px;top:676px;width:266px;height:1px;background:#a0a0a0"></div>
<div style="position:absolute;left:6px;top:677px;width:266px;height:1px;background:#ffffff"></div>
<div style="position:absolute;left:6px;top:680px;width:1163px;height:1px;background:#808080"></div>
<div style="position:absolute;left:272px;top:125px;width:897px;height:531px;background:#ffffff"></div>
<div style="position:absolute;left:272px;top:125px;width:897px;height:2px;background:#808080"></div>
<div style="position:absolute;left:272px;top:125px;width:2px;height:531px;background:#808080"></div>
<div style="position:absolute;left:274px;top:127px;width:895px;height:1px;background:#404040"></div>
<div style="position:absolute;left:274px;top:127px;width:1px;height:509px;background:#404040"></div>
<div style="position:absolute;left:275px;top:128px;width:19px;height:508px;background:linear-gradient(90deg,#f2f2f2,#e6e6e6 30%,#e9e9e9 80%,#f6f6f6)"></div>
<div style="position:absolute;left:318px;top:127px;width:228px;height:21px;background:#fbfbfb;border-left:1px solid #808080;border-top:1px solid #808080;border-bottom:1px solid #808080;border-right:1px solid #808080"></div>
<div style="position:absolute;left:366px;top:127px;width:1px;height:21px;background:#808080"></div>
<div style="position:absolute;left:432px;top:127px;width:1px;height:21px;background:#808080"></div>
<div style="position:absolute;left:468px;top:127px;width:1px;height:21px;background:#808080"></div>
<div style="position:absolute;left:504px;top:127px;width:1px;height:21px;background:#808080"></div>
<div class="t" style="left:323px;top:133px;font-family:'Liberation Mono',monospace;font-size:11px;letter-spacing:-0.6px">Result</div>
<div class="t" style="left:371px;top:132px;color:#0000d0">文本型</div>
<span class="c" style="left:341px;top:152px;color:#0000a0">如果</span>
<span class="c" style="left:371px;top:152px;color:#800000;font-family:'Liberation Mono',monospace;font-size:11px;letter-spacing:-0.6px">(</span>
<span class="c" style="left:377px;top:152px;color:#800000">取文本长度</span>
<span class="c" style="left:443px;top:152px;color:#000000;font-family:'Liberation Mono',monospace;font-size:11px;letter-spacing:-0.6px">(appid.</span>
<span class="c" style="left:485px;top:152px;color:#000000">内容</span>
<span class="c" style="left:509px;top:152px;color:#000000;font-family:'Liberation Mono',monospace;font-size:11px;letter-spacing:-0.6px">)</span>
<span class="c" style="left:521px;top:152px;width:12px;text-align:center;color:#000000;font-family:'Liberation Sans',sans-serif;font-size:13px;">≠</span>
<span class="c" style="left:539px;top:152px;color:#000000;font-family:'Liberation Mono',monospace;font-size:11px;letter-spacing:-0.6px">32)</span>
<span class="c" style="left:341px;top:170px;color:#800000">信息框</span>
<span class="c" style="left:383px;top:170px;color:#000000;font-family:'Liberation Mono',monospace;font-size:11px;letter-spacing:-0.6px">(</span>
<span class="c" style="left:389px;top:170px;width:12px;text-align:right;padding-right:1px;color:#008080;font-family:'Liberation Serif',serif;font-size:15px;">“</span>
<span class="c" style="left:401px;top:170px;color:#008080;font-family:'Liberation Mono',monospace;font-size:11px;letter-spacing:-0.6px">APP</span>
<span class="c" style="left:425px;top:170px;color:#008080;font-family:'Liberation Mono',monospace;font-size:11px;letter-spacing:-0.6px">ID</span>
<span class="c" style="left:437px;top:170px;color:#008080">错误</span>
<span class="c" style="left:461px;top:170px;width:12px;text-align:left;padding-left:2px;color:#008080;font-family:'Liberation Serif',serif;font-size:15px;">”</span>
<span class="c" style="left:473px;top:170px;color:#000000;font-family:'Liberation Mono',monospace;font-size:11px;letter-spacing:-0.6px">,</span>
<span class="c" style="left:485px;top:170px;color:#000000;font-family:'Liberation Mono',monospace;font-size:11px;letter-spacing:-0.6px">0,</span>
<span class="c" style="left:503px;top:170px;width:12px;text-align:right;padding-right:1px;color:#008080;font-family:'Liberation Serif',serif;font-size:15px;">“</span>
<span class="c" style="left:515px;top:170px;color:#008080">温馨提示</span>
<span class="c" style="left:563px;top:170px;width:12px;text-align:left;padding-left:2px;color:#008080;font-family:'Liberation Serif',serif;font-size:15px;">”</span>
<span class="c" style="left:575px;top:170px;color:#000000;font-family:'Liberation Mono',monospace;font-size:11px;letter-spacing:-0.6px">,</span>
<span class="c" style="left:587px;top:170px;color:#000000;font-family:'Liberation Mono',monospace;font-size:11px;letter-spacing:-0.6px">)</span>
<span class="c" style="left:363px;top:188px;color:#0000a0">如果</span>
<span class="c" style="left:393px;top:188px;color:#800000;font-family:'Liberation Mono',monospace;font-size:11px;letter-spacing:-0.6px">(</span>
<span class="c" style="left:399px;top:188px;color:#800000">取文本长度</span>
<span class="c" style="left:465px;top:188px;color:#000000;font-family:'Liberation Mono',monospace;font-size:11px;letter-spacing:-0.6px">(apppwd.</span>
<span class="c" style="left:513px;top:188px;color:#000000">内容</span>
<span class="c" style="left:537px;top:188px;color:#000000;font-family:'Liberation Mono',monospace;font-size:11px;letter-spacing:-0.6px">)</span>
<span class="c" style="left:549px;top:188px;width:12px;text-align:center;color:#000000;font-family:'Liberation Sans',sans-serif;font-size:13px;">≠</span>
<span class="c" style="left:567px;top:188px;color:#000000;font-family:'Liberation Mono',monospace;font-size:11px;letter-spacing:-0.6px">32)</span>
<span class="c" style="left:363px;top:206px;color:#800000">信息框</span>
<span class="c" style="left:405px;top:206px;color:#000000;font-family:'Liberation Mono',monospace;font-size:11px;letter-spacing:-0.6px">(</span>
<span class="c" style="left:411px;top:206px;width:12px;text-align:right;padding-right:1px;color:#008080;font-family:'Liberation Serif',serif;font-size:15px;">“</span>
<span class="c" style="left:423px;top:206px;color:#008080;font-family:'Liberation Mono',monospace;font-size:11px;letter-spacing:-0.6px">APP</span>
<span class="c" style="left:447px;top:206px;color:#008080">密钥错误</span>
<span class="c" style="left:495px;top:206px;width:12px;text-align:left;padding-left:2px;color:#008080;font-family:'Liberation Serif',serif;font-size:15px;">”</span>
<span class="c" style="left:507px;top:206px;color:#000000;font-family:'Liberation Mono',monospace;font-size:11px;letter-spacing:-0.6px">,</span>
<span class="c" style="left:519px;top:206px;color:#000000;font-family:'Liberation Mono',monospace;font-size:11px;letter-spacing:-0.6px">0,</span>
<span class="c" style="left:537px;top:206px;width:12px;text-align:right;padding-right:1px;color:#008080;font-family:'Liberation Serif',serif;font-size:15px;">“</span>
<span class="c" style="left:549px;top:206px;color:#008080">温馨提示</span>
<span class="c" style="left:597px;top:206px;width:12px;text-align:left;padding-left:2px;color:#008080;font-family:'Liberation Serif',serif;font-size:15px;">”</span>
<span class="c" style="left:609px;top:206px;color:#000000;font-family:'Liberation Mono',monospace;font-size:11px;letter-spacing:-0.6px">,</span>
<span class="c" style="left:621px;top:206px;color:#000000;font-family:'Liberation Mono',monospace;font-size:11px;letter-spacing:-0.6px">)</span>
<span class="c" style="left:363px;top:224px;color:#000000;font-family:'Liberation Mono',monospace;font-size:11px;letter-spacing:-0.6px">Result</span>
<span class="c" style="left:405px;top:224px;width:12px;text-align:center;color:#000000;font-family:'Liberation Sans',sans-serif;font-size:13px;">=</span>
<span class="c" style="left:423px;top:224px;color:#800000">网页</span>
<span class="c" style="left:447px;top:224px;color:#800000;font-family:'Liberation Mono',monospace;font-size:11px;letter-spacing:-0.6px">_</span>
<span class="c" style="left:453px;top:224px;color:#800000">访问</span>
<span class="c" style="left:477px;top:224px;color:#800000;font-family:'Liberation Mono',monospace;font-size:11px;letter-spacing:-0.6px">s_usc2</span>
<span class="c" style="left:519px;top:224px;color:#000000;font-family:'Liberation Mono',monospace;font-size:11px;letter-spacing:-0.6px">(service</span>
<span class="c" style="left:573px;top:224px;width:12px;text-align:center;color:#000000;font-family:'Liberation Sans',sans-serif;font-size:13px;">+</span>
<span class="c" style="left:591px;top:224px;width:12px;text-align:right;padding-right:1px;color:#008080;font-family:'Liberation Serif',serif;font-size:15px;">“</span>
<span class="c" style="left:603px;top:224px;color:#008080;font-family:'Liberation Mono',monospace;font-size:11px;letter-spacing:-0.6px">/lps/token/</span>
<span class="c" style="left:669px;top:224px;width:12px;text-align:left;padding-left:2px;color:#008080;font-family:'Liberation Serif',serif;font-size:15px;">”</span>
<span class="c" style="left:687px;top:224px;width:12px;text-align:center;color:#000000;font-family:'Liberation Sans',sans-serif;font-size:13px;">+</span>
<span class="c" style="left:705px;top:224px;color:#000000;font-family:'Liberation Mono',monospace;font-size:11px;letter-spacing:-0.6px">appid.</span>
<span class="c" style="left:741px;top:224px;color:#000000">内容</span>
<span class="c" style="left:765px;top:224px;color:#000000;font-family:'Liberation Mono',monospace;font-size:11px;letter-spacing:-0.6px">,</span>
<span class="c" style="left:777px;top:224px;color:#3a0000;font-family:'Liberation Mono',monospace;font-size:11px;letter-spacing:-0.6px">1</span>
<span class="c" style="left:783px;top:224px;color:#000000;font-family:'Liberation Mono',monospace;font-size:11px;letter-spacing:-0.6px">,</span>
<span class="c" style="left:795px;top:224px;width:12px;text-align:right;padding-right:1px;color:#008080;font-family:'Liberation Serif',serif;font-size:15px;">“</span>
<span class="c" style="left:807px;top:224px;color:#008080;font-family:'Liberation Mono',monospace;font-size:11px;letter-spacing:-0.6px">pwd=</span>
<span class="c" style="left:831px;top:224px;width:12px;text-align:left;padding-left:2px;color:#008080;font-family:'Liberation Serif',serif;font-size:15px;">”</span>
<span class="c" style="left:849px;top:224px;width:12px;text-align:center;color:#000000;font-family:'Liberation Sans',sans-serif;font-size:13px;">+</span>
<span class="c" style="left:867px;top:224px;color:#000000;font-family:'Liberation Mono',monospace;font-size:11px;letter-spacing:-0.6px">apppwd.</span>
<span class="c" style="left:909px;top:224px;color:#000000">内容</span>
<span class="c" style="left:933px;top:224px;color:#000000;font-family:'Liberation Mono',monospace;font-size:11px;letter-spacing:-0.6px">,</span>
<span class="c" style="left:945px;top:224px;width:12px;text-align:right;padding-right:1px;color:#008080;font-family:'Liberation Serif',serif;font-size:15px;">“</span>
<span class="c" style="left:957px;top:224px;width:12px;text-align:left;padding-left:2px;color:#008080;font-family:'Liberation Serif',serif;font-size:15px;">”</span>
<span class="c" style="left:969px;top:224px;color:#000000;font-family:'Liberation Mono',monospace;font-size:11px;letter-spacing:-0.6px">,</span>
<span class="c" style="left:981px;top:224px;color:#000000;font-family:'Liberation Mono',monospace;font-size:11px;letter-spacing:-0.6px">,</span>
<span class="c" style="left:993px;top:224px;width:12px;text-align:right;padding-right:1px;color:#008080;font-family:'Liberation Serif',serif;font-size:15px;">“</span>
<span class="c" style="left:1005px;top:224px;width:12px;text-align:left;padding-left:2px;color:#008080;font-family:'Liberation Serif',serif;font-size:15px;">”</span>
<span class="c" style="left:1017px;top:224px;color:#000000;font-family:'Liberation Mono',monospace;font-size:11px;letter-spacing:-0.6px">,</span>
<span class="c" style="left:1029px;top:224px;color:#000000;font-family:'Liberation Mono',monospace;font-size:11px;letter-spacing:-0.6px">,</span>
<span class="c" style="left:1041px;top:224px;color:#000000;font-family:'Liberation Mono',monospace;font-size:11px;letter-spacing:-0.6px">,</span>
<span class="c" style="left:1053px;top:224px;color:#000000;font-family:'Liberation Mono',monospace;font-size:11px;letter-spacing:-0.6px">,</span>
<span class="c" style="left:1065px;top:224px;color:#000000;font-family:'Liberation Mono',monospace;font-size:11px;letter-spacing:-0.6px">)</span>
<span class="c" style="left:363px;top:242px;color:#800000">输出调试文本</span>
<span class="c" style="left:441px;top:242px;color:#000000;font-family:'Liberation Mono',monospace;font-size:11px;letter-spacing:-0.6px">(Result)</span>
<span class="c" style="left:385px;top:260px;color:#0000a0">如果</span>
<span class="c" style="left:415px;top:260px;color:#000000;font-family:'Liberation Mono',monospace;font-size:11px;letter-spacing:-0.6px">(Json.</span>
<span class="c" style="left:451px;top:260px;color:#800000">解析</span>
<span class="c" style="left:481px;top:260px;color:#000000;font-family:'Liberation Mono',monospace;font-size:11px;letter-spacing:-0.6px">(Result))</span>
<span class="c" style="left:407px;top:278px;color:#0000a0">如果</span>
<span class="c" style="left:437px;top:278px;color:#800000;font-family:'Liberation Mono',monospace;font-size:11px;letter-spacing:-0.6px">(</span>
<span class="c" style="left:443px;top:278px;color:#800000">到整数</span>
<span class="c" style="left:485px;top:278px;color:#000000;font-family:'Liberation Mono',monospace;font-size:11px;letter-spacing:-0.6px">(Json.</span>
<span class="c" style="left:521px;top:278px;color:#800000">取通用属性</span>
<span class="c" style="left:587px;top:278px;color:#000000;font-family:'Liberation Mono',monospace;font-size:11px;letter-spacing:-0.6px">(</span>
<span class="c" style="left:593px;top:278px;width:12px;text-align:right;padding-right:1px;color:#008080;font-family:'Liberation Serif',serif;font-size:15px;">“</span>
<span class="c" style="left:605px;top:278px;color:#008080;font-family:'Liberation Mono',monospace;font-size:11px;letter-spacing:-0.6px">error</span>
<span class="c" style="left:635px;top:278px;width:12px;text-align:left;padding-left:2px;color:#008080;font-family:'Liberation Serif',serif;font-size:15px;">”</span>
<span class="c" style="left:647px;top:278px;color:#000000;font-family:'Liberation Mono',monospace;font-size:11px;letter-spacing:-0.6px">))</span>
<span class="c" style="left:665px;top:278px;width:12px;text-align:center;color:#000000;font-family:'Liberation Sans',sans-serif;font-size:13px;">=</span>
<span class="c" style="left:683px;top:278px;color:#000000;font-family:'Liberation Mono',monospace;font-size:11px;letter-spacing:-0.6px">0)</span>
<span class="c" style="left:407px;top:296px;color:#000000;font-family:'Liberation Mono',monospace;font-size:11px;letter-spacing:-0.6px">token.</span>
<span class="c" style="left:443px;top:296px;color:#000000">内容</span>
<span class="c" style="left:473px;top:296px;width:12px;text-align:center;color:#000000;font-family:'Liberation Sans',sans-serif;font-size:13px;">=</span>
<span class="c" style="left:491px;top:296px;color:#000000;font-family:'Liberation Mono',monospace;font-size:11px;letter-spacing:-0.6px">Json.</span>
<span class="c" style="left:521px;top:296px;color:#800000">取通用属性</span>
<span class="c" style="left:587px;top:296px;color:#000000;font-family:'Liberation Mono',monospace;font-size:11px;letter-spacing:-0.6px">(</span>
<span class="c" style="left:593px;top:296px;width:12px;text-align:right;padding-right:1px;color:#008080;font-family:'Liberation Serif',serif;font-size:15px;">“</span>
<span class="c" style="left:605px;top:296px;color:#008080;font-family:'Liberation Mono',monospace;font-size:11px;letter-spacing:-0.6px">token</span>
<span class="c" style="left:635px;top:296px;width:12px;text-align:left;padding-left:2px;color:#008080;font-family:'Liberation Serif',serif;font-size:15px;">”</span>
<span class="c" style="left:647px;top:296px;color:#000000;font-family:'Liberation Mono',monospace;font-size:11px;letter-spacing:-0.6px">)</span>
<span class="c" style="left:407px;top:314px;color:#000000;font-family:'Liberation Mono',monospace;font-size:11px;letter-spacing:-0.6px">appid.</span>
<span class="c" style="left:443px;top:314px;color:#000000">禁止</span>
<span class="c" style="left:473px;top:314px;width:12px;text-align:center;color:#000000;font-family:'Liberation Sans',sans-serif;font-size:13px;">=</span>
<span class="c" style="left:491px;top:314px;color:#0000a0">真</span>
<span class="c" style="left:407px;top:332px;color:#000000;font-family:'Liberation Mono',monospace;font-size:11px;letter-spacing:-0.6px">apppwd.</span>
<span class="c" style="left:449px;top:332px;color:#000000">禁止</span>
<span class="c" style="left:479px;top:332px;width:12px;text-align:center;color:#000000;font-family:'Liberation Sans',sans-serif;font-size:13px;">=</span>
<span class="c" style="left:497px;top:332px;color:#0000a0">真</span>
<span class="c" style="left:407px;top:350px;color:#000000">取</span>
<span class="c" style="left:419px;top:350px;color:#000000;font-family:'Liberation Mono',monospace;font-size:11px;letter-spacing:-0.6px">token.</span>
<span class="c" style="left:455px;top:350px;color:#000000">禁止</span>
<span class="c" style="left:485px;top:350px;width:12px;text-align:center;color:#000000;font-family:'Liberation Sans',sans-serif;font-size:13px;">=</span>
<span class="c" style="left:503px;top:350px;color:#0000a0">真</span>
<span class="c" style="left:407px;top:368px;color:#000000;font-family:'Liberation Mono',monospace;font-size:11px;letter-spacing:-0.6px">pwdz.</span>
<span class="c" style="left:437px;top:368px;color:#000000">可视</span>
<span class="c" style="left:467px;top:368px;width:12px;text-align:center;color:#000000;font-family:'Liberation Sans',sans-serif;font-size:13px;">=</span>
<span class="c" style="left:485px;top:368px;color:#0000a0">真</span>
<span class="c" style="left:407px;top:386px;color:#000000;font-family:'Liberation Mono',monospace;font-size:11px;letter-spacing:-0.6px">tokenz.</span>
<span class="c" style="left:449px;top:386px;color:#000000">可视</span>
<span class="c" style="left:479px;top:386px;width:12px;text-align:center;color:#000000;font-family:'Liberation Sans',sans-serif;font-size:13px;">=</span>
<span class="c" style="left:497px;top:386px;color:#0000a0">真</span>
<span class="c" style="left:407px;top:404px;color:#000000">密钥</span>
<span class="c" style="left:437px;top:404px;width:12px;text-align:center;color:#000000;font-family:'Liberation Sans',sans-serif;font-size:13px;">=</span>
<span class="c" style="left:455px;top:404px;color:#000000;font-family:'Liberation Mono',monospace;font-size:11px;letter-spacing:-0.6px">apppwd.</span>
<span class="c" style="left:497px;top:404px;color:#000000">内容</span>
<span class="c" style="left:407px;top:422px;color:#800000">写配置项</span>
<span class="c" style="left:461px;top:422px;color:#800000;font-family:'Liberation Mono',monospace;font-size:11px;letter-spacing:-0.6px">(</span>
<span class="c" style="left:467px;top:422px;color:#800000">取运行目录</span>
<span class="c" style="left:533px;top:422px;color:#000000;font-family:'Liberation Mono',monospace;font-size:11px;letter-spacing:-0.6px">()</span>
<span class="c" style="left:551px;top:422px;width:12px;text-align:center;color:#000000;font-family:'Liberation Sans',sans-serif;font-size:13px;">+</span>
<span class="c" style="left:569px;top:422px;width:12px;text-align:right;padding-right:1px;color:#008080;font-family:'Liberation Serif',serif;font-size:15px;">“</span>
<span class="c" style="left:581px;top:422px;color:#008080;font-family:'Liberation Mono',monospace;font-size:11px;letter-spacing:-0.6px">/config.ini</span>
<span class="c" style="left:647px;top:422px;width:12px;text-align:left;padding-left:2px;color:#008080;font-family:'Liberation Serif',serif;font-size:15px;">”</span>
<span class="c" style="left:659px;top:422px;color:#000000;font-family:'Liberation Mono',monospace;font-size:11px;letter-spacing:-0.6px">,</span>
<span class="c" style="left:671px;top:422px;width:12px;text-align:right;padding-right:1px;color:#008080;font-family:'Liberation Serif',serif;font-size:15px;">“</span>
<span class="c" style="left:683px;top:422px;color:#008080;font-family:'Liberation Mono',monospace;font-size:11px;letter-spacing:-0.6px">Pays</span>
<span class="c" style="left:707px;top:422px;width:12px;text-align:left;padding-left:2px;color:#008080;font-family:'Liberation Serif',serif;font-size:15px;">”</span>
<span class="c" style="left:719px;top:422px;color:#000000;font-family:'Liberation Mono',monospace;font-size:11px;letter-spacing:-0.6px">,</span>
<span class="c" style="left:731px;top:422px;width:12px;text-align:right;padding-right:1px;color:#008080;font-family:'Liberation Serif',serif;font-size:15px;">“</span>
<span class="c" style="left:743px;top:422px;color:#008080;font-family:'Liberation Mono',monospace;font-size:11px;letter-spacing:-0.6px">APPId</span>
<span class="c" style="left:773px;top:422px;width:12px;text-align:left;padding-left:2px;color:#008080;font-family:'Liberation Serif',serif;font-size:15px;">”</span>
<span class="c" style="left:785px;top:422px;color:#000000;font-family:'Liberation Mono',monospace;font-size:11px;letter-spacing:-0.6px">,</span>
<span class="c" style="left:797px;top:422px;color:#000000;font-family:'Liberation Mono',monospace;font-size:11px;letter-spacing:-0.6px">appid.</span>
<span class="c" style="left:833px;top:422px;color:#000000">内容</span>
<span class="c" style="left:857px;top:422px;color:#000000;font-family:'Liberation Mono',monospace;font-size:11px;letter-spacing:-0.6px">)</span>
<span class="c" style="left:407px;top:440px;color:#800000">写配置项</span>
<span class="c" style="left:461px;top:440px;color:#800000;font-family:'Liberation Mono',monospace;font-size:11px;letter-spacing:-0.6px">(</span>
<span class="c" style="left:467px;top:440px;color:#800000">取运行目录</span>
<span class="c" style="left:533px;top:440px;color:#000000;font-family:'Liberation Mono',monospace;font-size:11px;letter-spacing:-0.6px">()</span>
<span class="c" style="left:551px;top:440px;width:12px;text-align:center;color:#000000;font-family:'Liberation Sans',sans-serif;font-size:13px;">+</span>
<span class="c" style="left:569px;top:440px;width:12px;text-align:right;padding-right:1px;color:#008080;font-family:'Liberation Serif',serif;font-size:15px;">“</span>
<span class="c" style="left:581px;top:440px;color:#008080;font-family:'Liberation Mono',monospace;font-size:11px;letter-spacing:-0.6px">/config.ini</span>
<span class="c" style="left:647px;top:440px;width:12px;text-align:left;padding-left:2px;color:#008080;font-family:'Liberation Serif',serif;font-size:15px;">”</span>
<span class="c" style="left:659px;top:440px;color:#000000;font-family:'Liberation Mono',monospace;font-size:11px;letter-spacing:-0.6px">,</span>
<span class="c" style="left:671px;top:440px;width:12px;text-align:right;padding-right:1px;color:#008080;font-family:'Liberation Serif',serif;font-size:15px;">“</span>
<span class="c" style="left:683px;top:440px;color:#008080;font-family:'Liberation Mono',monospace;font-size:11px;letter-spacing:-0.6px">Pays</span>
<span class="c" style="left:707px;top:440px;width:12px;text-align:left;padding-left:2px;color:#008080;font-family:'Liberation Serif',serif;font-size:15px;">”</span>
<span class="c" style="left:719px;top:440px;color:#000000;font-family:'Liberation Mono',monospace;font-size:11px;letter-spacing:-0.6px">,</span>
<span class="c" style="left:731px;top:440px;width:12px;text-align:right;padding-right:1px;color:#008080;font-family:'Liberation Serif',serif;font-size:15px;">“</span>
<span class="c" style="left:743px;top:440px;color:#008080;font-family:'Liberation Mono',monospace;font-size:11px;letter-spacing:-0.6px">APPPwd</span>
<span class="c" style="left:779px;top:440px;width:12px;text-align:left;padding-left:2px;color:#008080;font-family:'Liberation Serif',serif;font-size:15px;">”</span>
<span class="c" style="left:791px;top:440px;color:#000000;font-family:'Liberation Mono',monospace;font-size:11px;letter-spacing:-0.6px">,</span>
<span class="c" style="left:803px;top:440px;color:#000000;font-family:'Liberation Mono',monospace;font-size:11px;letter-spacing:-0.6px">apppwd.</span>
<span class="c" style="left:845px;top:440px;color:#000000">内容</span>
<span class="c" style="left:869px;top:440px;color:#000000;font-family:'Liberation Mono',monospace;font-size:11px;letter-spacing:-0.6px">)</span>
<span class="c" style="left:407px;top:458px;color:#000000">日志</span>
<span class="c" style="left:431px;top:458px;color:#000000;font-family:'Liberation Mono',monospace;font-size:11px;letter-spacing:-0.6px">.</span>
<span class="c" style="left:437px;top:458px;color:#000000">内容</span>
<span class="c" style="left:467px;top:458px;width:12px;text-align:center;color:#000000;font-family:'Liberation Sans',sans-serif;font-size:13px;">=</span>
<span class="c" style="left:485px;top:458px;width:12px;text-align:right;padding-right:1px;color:#008080;font-family:'Liberation Serif',serif;font-size:15px;">“</span>
<span class="c" style="left:497px;top:458px;color:#008080">操作日志</span>
<span class="c" style="left:545px;top:458px;width:12px;text-align:left;padding-left:2px;color:#008080;font-family:'Liberation Serif',serif;font-size:15px;">”</span>
<span class="c" style="left:563px;top:458px;width:12px;text-align:center;color:#000000;font-family:'Liberation Sans',sans-serif;font-size:13px;">+</span>
<span class="c" style="left:581px;top:458px;color:#000000;font-family:'Liberation Mono',monospace;font-size:11px;letter-spacing:-0.6px">#</span>
<span class="c" style="left:587px;top:458px;color:#000000">换行符</span>
<span class="c" style="left:629px;top:458px;width:12px;text-align:center;color:#000000;font-family:'Liberation Sans',sans-serif;font-size:13px;">+</span>
<span class="c" style="left:647px;top:458px;width:12px;text-align:right;padding-right:1px;color:#008080;font-family:'Liberation Serif',serif;font-size:15px;">“</span>
<span class="c" style="left:659px;top:458px;color:#008080">欢迎您使用</span>
<span class="c" style="left:719px;top:458px;color:#008080;font-family:'Liberation Mono',monospace;font-size:11px;letter-spacing:-0.6px">Pays</span>
<span class="c" style="left:743px;top:458px;width:12px;text-align:left;padding-left:2px;color:#008080;font-family:'Liberation Serif',serif;font-size:15px;">”</span>
<span class="c" style="left:407px;top:476px;color:#000000">日志</span>
<span class="c" style="left:431px;top:476px;color:#000000;font-family:'Liberation Mono',monospace;font-size:11px;letter-spacing:-0.6px">.</span>
<span class="c" style="left:437px;top:476px;color:#800000">加入文本</span>
<span class="c" style="left:491px;top:476px;color:#000000;font-family:'Liberation Mono',monospace;font-size:11px;letter-spacing:-0.6px">(#</span>
<span class="c" style="left:503px;top:476px;color:#000000">换行符</span>
<span class="c" style="left:545px;top:476px;width:12px;text-align:center;color:#000000;font-family:'Liberation Sans',sans-serif;font-size:13px;">+</span>
<span class="c" style="left:563px;top:476px;width:12px;text-align:right;padding-right:1px;color:#008080;font-family:'Liberation Serif',serif;font-size:15px;">“</span>
<span class="c" style="left:575px;top:476px;color:#008080;font-family:'Liberation Mono',monospace;font-size:11px;letter-spacing:-0.6px">[</span>
<span class="c" style="left:581px;top:476px;color:#008080">返回信息</span>
<span class="c" style="left:629px;top:476px;color:#008080;font-family:'Liberation Mono',monospace;font-size:11px;letter-spacing:-0.6px">]:[</span>
<span class="c" style="left:647px;top:476px;width:12px;text-align:left;padding-left:2px;color:#008080;font-family:'Liberation Serif',serif;font-size:15px;">”</span>
<span class="c" style="left:665px;top:476px;width:12px;text-align:center;color:#000000;font-family:'Liberation Sans',sans-serif;font-size:13px;">+</span>
<span class="c" style="left:683px;top:476px;color:#800000;font-family:'Liberation Mono',monospace;font-size:11px;letter-spacing:-0.6px">time</span>
<span class="c" style="left:713px;top:476px;color:#000000;font-family:'Liberation Mono',monospace;font-size:11px;letter-spacing:-0.6px">()</span>
<span class="c" style="left:731px;top:476px;width:12px;text-align:center;color:#000000;font-family:'Liberation Sans',sans-serif;font-size:13px;">+</span>
<span class="c" style="left:749px;top:476px;width:12px;text-align:right;padding-right:1px;color:#008080;font-family:'Liberation Serif',serif;font-size:15px;">“</span>
<span class="c" style="left:761px;top:476px;color:#008080;font-family:'Liberation Mono',monospace;font-size:11px;letter-spacing:-0.6px">]</span>
<span class="c" style="left:767px;top:476px;width:12px;text-align:left;padding-left:2px;color:#008080;font-family:'Liberation Serif',serif;font-size:15px;">”</span>
<span class="c" style="left:785px;top:476px;width:12px;text-align:center;color:#000000;font-family:'Liberation Sans',sans-serif;font-size:13px;">+</span>
<span class="c" style="left:803px;top:476px;width:12px;text-align:right;padding-right:1px;color:#008080;font-family:'Liberation Serif',serif;font-size:15px;">“</span>
<span class="c" style="left:815px;top:476px;color:#008080">获取安全</span>
<span class="c" style="left:863px;top:476px;color:#008080;font-family:'Liberation Mono',monospace;font-size:11px;letter-spacing:-0.6px">Token</span>
<span class="c" style="left:893px;top:476px;color:#008080">成功</span>
<span class="c" style="left:917px;top:476px;color:#008080;font-family:'Liberation Mono',monospace;font-size:11px;letter-spacing:-0.6px">,Pays</span>
<span class="c" style="left:947px;top:476px;color:#008080">安全专线为您的收款保驾护航中。</span>
<span class="c" style="left:1127px;top:476px;width:12px;text-align:left;padding-left:2px;color:#008080;font-family:'Liberation Serif',serif;font-size:15px;">”</span>
<span class="c" style="left:1139px;top:476px;color:#000000;font-family:'Liberation Mono',monospace;font-size:11px;letter-spacing:-0.6px">)</span>
<span class="c" style="left:407px;top:494px;color:#000000">日志</span>
<span class="c" style="left:431px;top:494px;color:#000000;font-family:'Liberation Mono',monospace;font-size:11px;letter-spacing:-0.6px">.</span>
<span class="c" style="left:437px;top:494px;color:#800000">加入文本</span>
<span class="c" style="left:491px;top:494px;color:#000000;font-family:'Liberation Mono',monospace;font-size:11px;letter-spacing:-0.6px">(#</span>
<span class="c" style="left:503px;top:494px;color:#000000">换行符</span>
<span class="c" style="left:545px;top:494px;width:12px;text-align:center;color:#000000;font-family:'Liberation Sans',sans-serif;font-size:13px;">+</span>
<span class="c" style="left:563px;top:494px;width:12px;text-align:right;padding-right:1px;color:#008080;font-family:'Liberation Serif',serif;font-size:15px;">“</span>
<span class="c" style="left:575px;top:494px;color:#008080;font-family:'Liberation Mono',monospace;font-size:11px;letter-spacing:-0.6px">[</span>
<span class="c" style="left:581px;top:494px;color:#008080">返回信息</span>
<span class="c" style="left:629px;top:494px;color:#008080;font-family:'Liberation Mono',monospace;font-size:11px;letter-spacing:-0.6px">]:[</span>
<span class="c" style="left:647px;top:494px;width:12px;text-align:left;padding-left:2px;color:#008080;font-family:'Liberation Serif',serif;font-size:15px;">”</span>
<span class="c" style="left:665px;top:494px;width:12px;text-align:center;color:#000000;font-family:'Liberation Sans',sans-serif;font-size:13px;">+</span>
<span class="c" style="left:683px;top:494px;color:#800000;font-family:'Liberation Mono',monospace;font-size:11px;letter-spacing:-0.6px">time</span>
<span class="c" style="left:713px;top:494px;color:#000000;font-family:'Liberation Mono',monospace;font-size:11px;letter-spacing:-0.6px">()</span>
<span class="c" style="left:731px;top:494px;width:12px;text-align:center;color:#000000;font-family:'Liberation Sans',sans-serif;font-size:13px;">+</span>
<span class="c" style="left:749px;top:494px;width:12px;text-align:right;padding-right:1px;color:#008080;font-family:'Liberation Serif',serif;font-size:15px;">“</span>
<span class="c" style="left:761px;top:494px;color:#008080;font-family:'Liberation Mono',monospace;font-size:11px;letter-spacing:-0.6px">]</span>
<span class="c" style="left:767px;top:494px;width:12px;text-align:left;padding-left:2px;color:#008080;font-family:'Liberation Serif',serif;font-size:15px;">”</span>
<span class="c" style="left:785px;top:494px;width:12px;text-align:center;color:#000000;font-family:'Liberation Sans',sans-serif;font-size:13px;">+</span>
<span class="c" style="left:803px;top:494px;color:#000000;font-family:'Liberation Mono',monospace;font-size:11px;letter-spacing:-0.6px">Json.</span>
<span class="c" style="left:833px;top:494px;color:#800000">取通用属性</span>
<span class="c" style="left:899px;top:494px;color:#000000;font-family:'Liberation Mono',monospace;font-size:11px;letter-spacing:-0.6px">(</span>
<span class="c" style="left:905px;top:494px;width:12px;text-align:right;padding-right:1px;color:#008080;font-family:'Liberation Serif',serif;font-size:15px;">“</span>
<span class="c" style="left:917px;top:494px;color:#008080;font-family:'Liberation Mono',monospace;font-size:11px;letter-spacing:-0.6px">msg</span>
<span class="c" style="left:935px;top:494px;width:12px;text-align:left;padding-left:2px;color:#008080;font-family:'Liberation Serif',serif;font-size:15px;">”</span>
<span class="c" style="left:947px;top:494px;color:#000000;font-family:'Liberation Mono',monospace;font-size:11px;letter-spacing:-0.6px">))</span>
<span class="c" style="left:384px;top:530px;color:#000000">日志</span>
<span class="c" style="left:408px;top:530px;color:#000000;font-family:'Liberation Mono',monospace;font-size:11px;letter-spacing:-0.6px">.</span>
<span class="c" style="left:414px;top:530px;color:#800000">加入文本</span>
<span class="c" style="left:468px;top:530px;color:#000000;font-family:'Liberation Mono',monospace;font-size:11px;letter-spacing:-0.6px">(#</span>
<span class="c" style="left:480px;top:530px;color:#000000">换行符</span>
<span class="c" style="left:522px;top:530px;width:12px;text-align:center;color:#000000;font-family:'Liberation Sans',sans-serif;font-size:13px;">+</span>
<span class="c" style="left:540px;top:530px;width:12px;text-align:right;padding-right:1px;color:#008080;font-family:'Liberation Serif',serif;font-size:15px;">“</span>
<span class="c" style="left:552px;top:530px;color:#008080;font-family:'Liberation Mono',monospace;font-size:11px;letter-spacing:-0.6px">[</span>
<span class="c" style="left:558px;top:530px;color:#008080">返回信息</span>
<span class="c" style="left:606px;top:530px;color:#008080;font-family:'Liberation Mono',monospace;font-size:11px;letter-spacing:-0.6px">]:[</span>
<span class="c" style="left:624px;top:530px;width:12px;text-align:left;padding-left:2px;color:#008080;font-family:'Liberation Serif',serif;font-size:15px;">”</span>
<span class="c" style="left:642px;top:530px;width:12px;text-align:center;color:#000000;font-family:'Liberation Sans',sans-serif;font-size:13px;">+</span>
<span class="c" style="left:660px;top:530px;color:#800000;font-family:'Liberation Mono',monospace;font-size:11px;letter-spacing:-0.6px">time</span>
<span class="c" style="left:690px;top:530px;color:#000000;font-family:'Liberation Mono',monospace;font-size:11px;letter-spacing:-0.6px">()</span>
<span class="c" style="left:708px;top:530px;width:12px;text-align:center;color:#000000;font-family:'Liberation Sans',sans-serif;font-size:13px;">+</span>
<span class="c" style="left:726px;top:530px;width:12px;text-align:right;padding-right:1px;color:#008080;font-family:'Liberation Serif',serif;font-size:15px;">“</span>
<span class="c" style="left:738px;top:530px;color:#008080;font-family:'Liberation Mono',monospace;font-size:11px;letter-spacing:-0.6px">]</span>
<span class="c" style="left:744px;top:530px;width:12px;text-align:left;padding-left:2px;color:#008080;font-family:'Liberation Serif',serif;font-size:15px;">”</span>
<span class="c" style="left:762px;top:530px;width:12px;text-align:center;color:#000000;font-family:'Liberation Sans',sans-serif;font-size:13px;">+</span>
<span class="c" style="left:780px;top:530px;width:12px;text-align:right;padding-right:1px;color:#008080;font-family:'Liberation Serif',serif;font-size:15px;">“</span>
<span class="c" style="left:792px;top:530px;color:#008080">读取服务器信息失败</span>
<span class="c" style="left:900px;top:530px;color:#008080;font-family:'Liberation Mono',monospace;font-size:11px;letter-spacing:-0.6px">,</span>
<span class="c" style="left:906px;top:530px;color:#008080">请确认网络已连接</span>
<span class="c" style="left:1002px;top:530px;width:12px;text-align:left;padding-left:2px;color:#008080;font-family:'Liberation Serif',serif;font-size:13px;">,</span>
<span class="c" style="left:1014px;top:530px;color:#008080">确认已连接任然无法读取的话</span>
<span class="c" style="left:384px;top:543px;color:#008080">此时</span>
<span class="c" style="left:408px;top:543px;color:#008080;font-family:'Liberation Mono',monospace;font-size:11px;letter-spacing:-0.6px">Pays</span>
<span class="c" style="left:432px;top:543px;color:#008080">服务器可能正在安全更新维护中</span>
<span class="c" style="left:600px;top:543px;width:12px;text-align:left;padding-left:2px;color:#008080;font-family:'Liberation Serif',serif;font-size:13px;">,</span>
<span class="c" style="left:612px;top:543px;color:#008080">请稍后重试</span>
<span class="c" style="left:672px;top:543px;width:12px;text-align:left;padding-left:2px;color:#008080;font-family:'Liberation Serif',serif;font-size:15px;">”</span>
<span class="c" style="left:684px;top:543px;color:#000000;font-family:'Liberation Mono',monospace;font-size:11px;letter-spacing:-0.6px">)</span>
<div style="position:absolute;left:321px;top:159px;width:16px;height:1px;background:repeating-linear-gradient(90deg,#7a7a7a 0 3px,transparent 3px 5px)"></div>
<div style="position:absolute;left:321px;top:159px;width:1px;height:31px;background:repeating-linear-gradient(180deg,#7a7a7a 0 3px,transparent 3px 5px)"></div>
<div style="position:absolute;left:321px;top:190px;width:34px;height:1px;background:repeating-linear-gradient(90deg,#7a7a7a 0 3px,transparent 3px 5px)"></div>
<svg style="left:355px;top:186px" width="5" height="9"><path d="M0 0.5l4.5 4-4.5 4z" fill="#808080"/></svg>
<div style="position:absolute;left:327px;top:177px;width:10px;height:1px;background:repeating-linear-gradient(90deg,#7a7a7a 0 3px,transparent 3px 5px)"></div>
<div style="position:absolute;left:327px;top:177px;width:1px;height:413px;background:repeating-linear-gradient(180deg,#7a7a7a 0 3px,transparent 3px 5px)"></div>
<svg style="left:323px;top:589px" width="9" height="6"><path d="M0 0.5h9l-4.5 5z" fill="#808080"/></svg>
<div style="position:absolute;left:343px;top:200px;width:16px;height:1px;background:repeating-linear-gradient(90deg,#7a7a7a 0 3px,transparent 3px 5px)"></div>
<div style="position:absolute;left:343px;top:200px;width:1px;height:31px;background:repeating-linear-gradient(180deg,#7a7a7a 0 3px,transparent 3px 5px)"></div>
<div style="position:absolute;left:343px;top:231px;width:12px;height:1px;background:repeating-linear-gradient(90deg,#7a7a7a 0 3px,transparent 3px 5px)"></div>
<svg style="left:355px;top:227px" width="5" height="9"><path d="M0 0.5l4.5 4-4.5 4z" fill="#808080"/></svg>
<div style="position:absolute;left:349px;top:213px;width:10px;height:1px;background:repeating-linear-gradient(90deg,#7a7a7a 0 3px,transparent 3px 5px)"></div>
<div style="position:absolute;left:349px;top:213px;width:1px;height:360px;background:repeating-linear-gradient(180deg,#7a7a7a 0 3px,transparent 3px 5px)"></div>
<svg style="left:345px;top:572px" width="9" height="6"><path d="M0 0.5h9l-4.5 5z" fill="#808080"/></svg>
<div style="position:absolute;left:365px;top:267px;width:17px;height:1px;background:repeating-linear-gradient(90deg,#7a7a7a 0 3px,transparent 3px 5px)"></div>
<div style="position:absolute;left:365px;top:267px;width:1px;height:276px;background:repeating-linear-gradient(180deg,#7a7a7a 0 3px,transparent 3px 5px)"></div>
<div style="position:absolute;left:365px;top:543px;width:12px;height:1px;background:repeating-linear-gradient(90deg,#7a7a7a 0 3px,transparent 3px 5px)"></div>
<svg style="left:377px;top:539px" width="5" height="9"><path d="M0 0.5l4.5 4-4.5 4z" fill="#808080"/></svg>
<div style="position:absolute;left:387px;top:285px;width:16px;height:1px;background:repeating-linear-gradient(90deg,#7a7a7a 0 3px,transparent 3px 5px)"></div>
<div style="position:absolute;left:387px;top:285px;width:1px;height:216px;background:repeating-linear-gradient(180deg,#7a7a7a 0 3px,transparent 3px 5px)"></div>
<div style="position:absolute;left:387px;top:501px;width:12px;height:1px;background:repeating-linear-gradient(90deg,#7a7a7a 0 3px,transparent 3px 5px)"></div>
<svg style="left:399px;top:497px" width="5" height="9"><path d="M0 0.5l4.5 4-4.5 4z" fill="#808080"/></svg>
<div style="position:absolute;left:393px;top:483px;width:10px;height:1px;background:repeating-linear-gradient(90deg,#7a7a7a 0 3px,transparent 3px 5px)"></div>
<div style="position:absolute;left:393px;top:483px;width:1px;height:23px;background:repeating-linear-gradient(180deg,#7a7a7a 0 3px,transparent 3px 5px)"></div>
<svg style="left:389px;top:505px" width="9" height="6"><path d="M0 0.5h9l-4.5 5z" fill="#808080"/></svg>
<div style="position:absolute;left:371px;top:518px;width:11px;height:1px;background:repeating-linear-gradient(90deg,#7a7a7a 0 3px,transparent 3px 5px)"></div>
<div style="position:absolute;left:371px;top:518px;width:1px;height:38px;background:repeating-linear-gradient(180deg,#7a7a7a 0 3px,transparent 3px 5px)"></div>
<svg style="left:367px;top:555px" width="9" height="6"><path d="M0 0.5h9l-4.5 5z" fill="#808080"/></svg>
<svg style="left:306px;top:248px" width="9" height="6"><path d="M0.5 0.5l3.5 2.5-3.5 2.5zM4.5 0.5l3.5 2.5-3.5 2.5z" fill="#000050"/></svg>
<svg style="left:306px;top:482px" width="9" height="6"><path d="M0.5 0.5l3.5 2.5-3.5 2.5zM4.5 0.5l3.5 2.5-3.5 2.5z" fill="#000050"/></svg>
<svg style="left:306px;top:500px" width="9" height="6"><path d="M0.5 0.5l3.5 2.5-3.5 2.5zM4.5 0.5l3.5 2.5-3.5 2.5z" fill="#000050"/></svg>
<svg style="left:306px;top:543px" width="9" height="6"><path d="M0.5 0.5l3.5 2.5-3.5 2.5zM4.5 0.5l3.5 2.5-3.5 2.5z" fill="#000050"/></svg>
<div style="position:absolute;left:318px;top:619px;width:283px;height:17px;background:linear-gradient(#f4f8f4,#e4ece4);border-left:1px solid #808080;border-top:1px solid #808080;border-right:1px solid #808080"></div>
<div style="position:absolute;left:378px;top:619px;width:1px;height:17px;background:#808080"></div>
<div style="position:absolute;left:450px;top:619px;width:1px;height:17px;background:#808080"></div>
<div style="position:absolute;left:486px;top:619px;width:1px;height:17px;background:#808080"></div>
<div style="position:absolute;left:522px;top:619px;width:1px;height:17px;background:#808080"></div>
<div class="t" style="left:323px;top:623px;">子程序名</div>
<div class="t" style="left:382px;top:623px;">返回值类型</div>
<div class="t" style="left:455px;top:623px;">公开</div>
<div class="t" style="left:491px;top:623px;">易包</div>
<div class="t" style="left:527px;top:623px;">备 注</div>
<div style="position:absolute;left:274px;top:636px;width:895px;height:17px;background:#f4f4f4"></div>
<div style="position:absolute;left:280px;top:636px;width:17px;height:17px;background:#f0f0f0;border-top:1px solid #fff;border-left:1px solid #fff;border-right:1px solid #404040;border-bottom:1px solid #404040;box-shadow:inset -1px -1px #a0a0a0"></div>
<svg style="left:285px;top:640px" width="6" height="9"><path d="M4.5 0.5v8l-4-4z" fill="#000"/></svg>
<div style="position:absolute;left:297px;top:636px;width:17px;height:17px;background:#f0f0f0;border-top:1px solid #fff;border-left:1px solid #fff;border-right:1px solid #404040;border-bottom:1px solid #404040;box-shadow:inset -1px -1px #a0a0a0"></div>
<div style="position:absolute;left:274px;top:653px;width:895px;height:2px;background:#f8f8f8"></div>
<div style="position:absolute;left:272px;top:655px;width:897px;height:20px;background:#f0f0f0"></div>
<svg style="left:0;top:0" width="1169" height="736"><path d="M273.5 656L281.5 672.5Q282.5 674 284.5 674H318.5Q320.5 674 321.5 672.5L329.5 656" fill="#f6f6f8" stroke="#1a1a1a" stroke-width="1.1"/><path d="M320.5 656L328.5 672.5Q329.5 674 331.5 674H410.5Q412.5 674 413.5 672.5L421.5 656" fill="#f6f6f8" stroke="#1a1a1a" stroke-width="1.1"/><path d="M412.5 656L420.5 672.5Q421.5 674 423.5 674H482.5Q484.5 674 485.5 672.5L493.5 656" fill="#f6f6f8" stroke="#1a1a1a" stroke-width="1.1"/><path d="M608.5 656L616.5 672.5Q617.5 674 619.5 674H645.5Q647.5 674 648.5 672.5L656.5 656" fill="#f6f6f8" stroke="#1a1a1a" stroke-width="1.1"/><path d="M647.5 656L655.5 672.5Q656.5 674 658.5 674H684.5Q686.5 674 687.5 672.5L695.5 656" fill="#f6f6f8" stroke="#1a1a1a" stroke-width="1.1"/><path d="M686.5 656L694.5 672.5Q695.5 674 697.5 674H795.5Q797.5 674 798.5 672.5L806.5 656" fill="#f6f6f8" stroke="#1a1a1a" stroke-width="1.1"/><path d="M797.5 656L805.5 672.5Q806.5 674 808.5 674H847.5Q849.5 674 850.5 672.5L858.5 656" fill="#f6f6f8" stroke="#1a1a1a" stroke-width="1.1"/><path d="M484.5 656L492.5 672.5Q493.5 674 495.5 674H606.5Q608.5 674 609.5 672.5L617.5 656" fill="#fcfcfc" stroke="#1a1a1a" stroke-width="1.1"/></svg>
<div style="position:absolute;left:274px;top:655px;width:895px;height:2px;background:#707070"></div>
<div class="t" style="left:287px;top:658px;color:#000080">窗口1</div>
<div class="t" style="left:334px;top:658px;color:#808000">[图片资源表]</div>
<div class="t" style="left:425px;top:658px;color:#000080">_启动窗口</div>
<div class="t" style="left:495px;top:658px;font-weight:bold">窗口程序集_操作窗</div>
<div class="t" style="left:620px;top:658px;color:#000080">警告</div>
<div class="t" style="left:659px;top:658px;color:#000080">微信</div>
<div class="t" style="left:701px;top:658px;">窗口程序集_微信</div>
<div class="t" style="left:809px;top:658px;">副程序</div>
<div style="position:absolute;left:272px;top:675px;width:897px;height:1px;background:#fafafa"></div>
<div style="position:absolute;left:6px;top:681px;width:1163px;height:29px;background:#f0f0f0"></div>
<svg style="left:12px;top:688px" width="7" height="6"><path d="M0.5 0.5l6 5M6.5 0.5l-6 5" stroke="#000" stroke-width="1.6"/></svg>
<div style="position:absolute;left:12px;top:701px;width:7px;height:7px;border:1px solid #000;border-top-width:2px"></div>
<div style="position:absolute;left:8px;top:682px;width:13px;height:15px;border-right:1px solid #404040;border-bottom:1px solid #808080"></div>
<div style="position:absolute;left:8px;top:697px;width:13px;height:13px;border-right:1px solid #404040;border-bottom:1px solid #404040"></div>
<div style="position:absolute;left:27px;top:685px;width:1px;height:21px;background:#808080"></div>
<div style="position:absolute;left:28px;top:685px;width:1px;height:21px;background:#ffffff"></div>
<div style="position:absolute;left:143px;top:685px;width:1px;height:21px;background:#808080"></div>
<div style="position:absolute;left:144px;top:685px;width:1px;height:21px;background:#ffffff"></div>
<div style="position:absolute;left:211px;top:685px;width:1px;height:21px;background:#808080"></div>
<div style="position:absolute;left:212px;top:685px;width:1px;height:21px;background:#ffffff"></div>
<div style="position:absolute;left:281px;top:685px;width:1px;height:21px;background:#808080"></div>
<div style="position:absolute;left:282px;top:685px;width:1px;height:21px;background:#ffffff"></div>
<div style="position:absolute;left:350px;top:685px;width:1px;height:21px;background:#808080"></div>
<div style="position:absolute;left:351px;top:685px;width:1px;height:21px;background:#ffffff"></div>
<div style="position:absolute;left:414px;top:685px;width:1px;height:21px;background:#808080"></div>
<div style="position:absolute;left:415px;top:685px;width:1px;height:21px;background:#ffffff"></div>
<div style="position:absolute;left:479px;top:685px;width:1px;height:21px;background:#808080"></div>
<div style="position:absolute;left:480px;top:685px;width:1px;height:21px;background:#ffffff"></div>
<div style="position:absolute;left:561px;top:685px;width:1px;height:21px;background:#808080"></div>
<div style="position:absolute;left:562px;top:685px;width:1px;height:21px;background:#ffffff"></div>
<div style="position:absolute;left:84px;top:683px;width:59px;height:24px;border-top:1px solid #fff;border-left:1px solid #fff;border-right:1px solid #404040;background:#f0f0f0"></div>
<div class="t" style="left:54px;top:689px;">提示</div>
<div class="t" style="left:111px;top:688px;">输出</div>
<div class="t" style="left:170px;top:689px;">调用表</div>
<div class="t" style="left:240px;top:689px;">监视表</div>
<div class="t" style="left:310px;top:689px;">变量表</div>
<div class="t" style="left:380px;top:689px;">搜寻1</div>
<div class="t" style="left:444px;top:689px;">搜寻2</div>
<div class="t" style="left:508px;top:689px;">剪辑历史</div>
<svg style="left:35px;top:689px" width="11" height="15"><path d="M2.2 4.5C2.2 1 8.8 1 8.8 4.5c0 2.5-2.3 2.5-2.3 5" fill="none" stroke="#000" stroke-width="3.4"/><path d="M2.2 4.5C2.2 1 8.8 1 8.8 4.5c0 2.5-2.3 2.5-2.3 5" fill="none" stroke="#f0f000" stroke-width="1.5"/><rect x="4.3" y="11" width="3" height="3" fill="#f0f000" stroke="#000"/></svg>
<svg style="left:92px;top:687px" width="12" height="13"><rect x="0.5" y="0.5" width="11" height="12" fill="#fff" stroke="#000"/><rect x="0" y="0" width="12" height="2.5" fill="#000080"/><path d="M2 5.5h6M2 7.5h7M2 9.5h4" stroke="#000"/></svg>
<svg style="left:150px;top:690px" width="12" height="12"><path d="M1.5 0v12M5.5 0v12M9.5 0v12" stroke="#000" stroke-width="1.1"/><path d="M0 1h3M4 1h3M8 1h3M0 4.5h3M4 4.5h3M8 4.5h3M0 8h3M4 8h3M8 8h3" stroke="#000" stroke-width="1.1"/></svg>
<svg style="left:218px;top:688px" width="15" height="15"><circle cx="6" cy="6" r="4.5" fill="none" stroke="#000" stroke-width="1.6"/><path d="M9.5 9.5l4.5 4.5" stroke="#000" stroke-width="2"/></svg>
<svg style="left:288px;top:689px" width="17" height="13"><path d="M0.7 5L4 1.2 7.6 5v2.5L4 11.5 0.7 7.5z" fill="#f0f020" stroke="#000" stroke-width="1.1"/><path d="M0.7 5L4 8.2 7.6 5M4 8.2v3.3" fill="none" stroke="#000"/><path d="M8.4 5L12 1.2 15.6 5v2.5L12 11.5 8.4 7.5z" fill="#fff" stroke="#000" stroke-width="1.1"/><path d="M8.4 5L12 8.2 15.6 5M12 8.2v3.3" fill="none" stroke="#000"/></svg>
<svg style="left:358px;top:688px" width="16" height="15"><path d="M1.5 1.5h10v11h-10z" fill="#fff" stroke="#000" stroke-width="1.5"/><path d="M3 4h3M3 6.5h3M3 9h3" stroke="#000"/><circle cx="9" cy="8" r="2.7" fill="#fff" stroke="#000" stroke-width="1.3"/><path d="M11 10l3.5 3.5" stroke="#000" stroke-width="1.8"/></svg>
<svg style="left:421px;top:688px" width="16" height="15"><path d="M1.5 1.5h10v11h-10z" fill="#fff" stroke="#000" stroke-width="1.5"/><path d="M3 4h3M3 6.5h3M3 9h3" stroke="#000"/><circle cx="9" cy="8" r="2.7" fill="#fff" stroke="#000" stroke-width="1.3"/><path d="M11 10l3.5 3.5" stroke="#000" stroke-width="1.8"/></svg>
<svg style="left:489px;top:689px" width="11" height="13"><path d="M0.5 0.5h10v12h-10z" fill="#fff" stroke="#000"/><path d="M2.5 3h6M2.5 5.5h6M2.5 8h6M2.5 10.5h4" stroke="#000"/></svg>
<div style="position:absolute;left:28px;top:710px;width:1141px;height:1px;background:#a0a0a0"></div>
<div style="position:absolute;left:28px;top:711px;width:1141px;height:25px;background:#ffffff"></div>
<div style="position:absolute;left:28px;top:711px;width:1141px;height:1px;background:#404040"></div>
<div style="position:absolute;left:28px;top:711px;width:1px;height:25px;background:#404040"></div>
<div style="position:absolute;left:15px;top:712px;width:1px;height:24px;background:#a0a0a0"></div>
<div style="position:absolute;left:16px;top:712px;width:1px;height:24px;background:#ffffff"></div>
<div style="position:absolute;left:272px;top:655px;width:2px;height:20px;background:#808080"></div>
<div style="position:absolute;left:265px;top:654px;width:1px;height:21px;background:#ffffff"></div></body></html>
